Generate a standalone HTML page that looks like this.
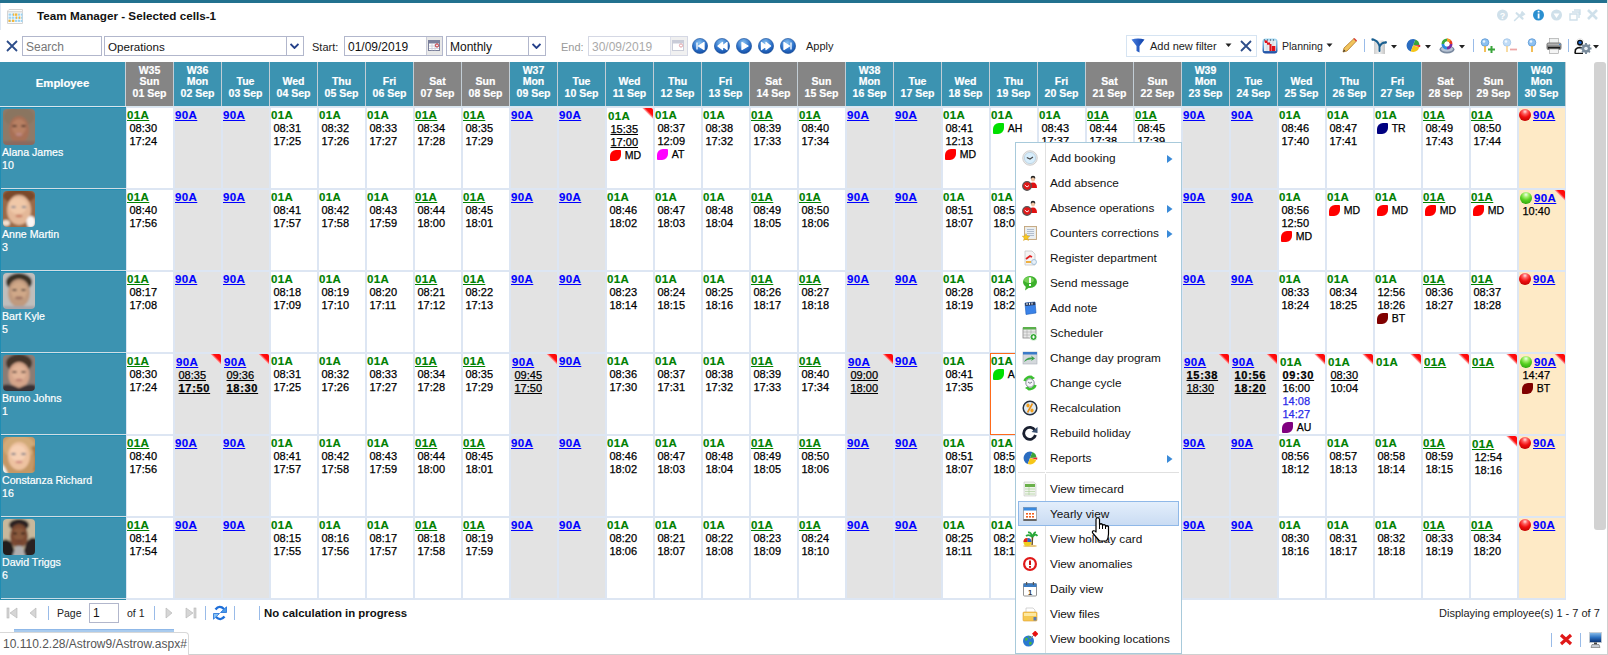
<!DOCTYPE html><html><head><meta charset="utf-8"><style>

*{box-sizing:border-box}
html,body{margin:0;padding:0;width:1608px;height:655px;overflow:hidden;background:#fff;font-family:"Liberation Sans", sans-serif;}
.a{position:absolute}
.hd{position:absolute;top:62px;height:44px;width:47px;color:#fff;font-weight:bold;font-size:10.5px;line-height:12px;text-align:center;-webkit-text-stroke-width:0.2px}
.hd div{position:absolute;left:0;width:47px;white-space:nowrap}
.c{position:absolute;width:48px;height:82px;border:1px solid #dde6f3;overflow:hidden}
.cd{position:absolute;left:0px;top:1px;font-weight:bold;font-size:11.5px;line-height:13px;white-space:nowrap;-webkit-text-stroke-width:0.15px;letter-spacing:0.4px}
.g{color:#008000}.b{color:#0000ff}
.tl{position:absolute;left:2.5px;font-size:11px;line-height:13px;white-space:nowrap;color:#000;-webkit-text-stroke-width:0.25px}
.u{text-decoration:underline}
.bu{font-weight:bold;text-decoration:underline;letter-spacing:0.7px}
.bl{color:#2a2ae8}
.flag{position:absolute;right:0;top:0}
.leaf{position:absolute;width:11px;height:11px;border-radius:6px 1px 6px 1px}
.ball{position:absolute;width:12px;height:12px;border-radius:50%}
.mi{position:absolute;left:1050px;font-size:11.8px;line-height:14px;white-space:nowrap;color:#111}
.tb{font-size:11px;color:#222;white-space:nowrap;position:absolute}

</style></head><body>
<div class="a" style="left:0;top:0;width:1607px;height:3px;background:#22718f"></div>
<div class="a" style="left:0;top:3px;width:1px;height:27px;background:#dfe8f3"></div>
<div class="a" style="left:1607px;top:0;width:1px;height:655px;background:#d0d0d0"></div>
<div class="a" style="left:0;top:654px;width:1608px;height:1px;background:#d0d0d0"></div>
<svg class="a" style="left:7px;top:9px" width="17" height="15" viewBox="0 0 17 15">
<path d="M2 0.5 H15.5 V14.5 H0.5 V2 Z" fill="#fbfcfd" stroke="#d4d4d4"/>
<rect x="1" y="2" width="14.5" height="1.5" fill="#dcdcdc"/>
<g fill="#9dd3f2"><rect x="1.5" y="4.5" width="14" height="2.2"/><rect x="1.5" y="7.6" width="14" height="2.2"/><rect x="1.5" y="10.7" width="14" height="2.2"/></g>
<g fill="#f7b534"><rect x="6" y="4.5" width="5" height="2.2"/><rect x="9" y="7.6" width="2" height="2.2"/><rect x="12" y="7.6" width="2" height="2.2"/><rect x="1.5" y="10.7" width="2" height="2.2"/><rect x="5" y="10.7" width="3" height="2.2"/></g>
<g stroke="#fff" stroke-width="0.6"><path d="M4.5 4v9M7.5 4v9M10.5 4v9M13.5 4v9"/></g>
</svg>
<div class="a" style="left:37px;top:8px;font-weight:bold;font-size:11.7px;line-height:16px;color:#111;white-space:nowrap">Team Manager - Selected cells-1</div>
<svg class="a" style="left:1494px;top:7px" width="110" height="17" viewBox="0 0 110 17">
<circle cx="8.5" cy="8" r="5.5" fill="#cfe0ea"/><text x="8.5" y="11.5" font-size="9" font-weight="bold" fill="#fff" text-anchor="middle" font-family="Liberation Sans">?</text>
<path d="M20.6 13.5 L26 8.2" stroke="#cfe0ea" stroke-width="1.6" stroke-linecap="round"/><path d="M22.6 6.2 L28.6 11.6" stroke="#cfe0ea" stroke-width="2.2" stroke-linecap="round"/><path d="M25.5 8.5 L28 3.8 L31.5 7.3 L27.5 10 Z" fill="#cfe0ea"/>
<circle cx="44.5" cy="8" r="5.5" fill="#2a8fd0"/><rect x="43.7" y="6.5" width="1.8" height="5" fill="#fff"/><rect x="43.7" y="3.8" width="1.8" height="1.6" fill="#fff"/>
<circle cx="62.5" cy="8" r="5.5" fill="#cfe0ea"/><path d="M59.5 6.5 L65.5 6.5 L62.5 11 Z" fill="#fff"/>
<path d="M76 7 h7 v6 h-7 z M78 5 h7 v6 M80 3 h6 v5" stroke="#cfe0ea" stroke-width="1.4" fill="none"/>
<path d="M94 3 L103 12 M103 3 L94 12" stroke="#cfe0ea" stroke-width="2.6"/>
</svg>
<svg class="a" style="left:6px;top:40px" width="12" height="12" viewBox="0 0 12 12"><path d="M1 1 L11 11 M11 1 L1 11" stroke="#2d4d8a" stroke-width="1.8"/></svg>
<div class="a" style="left:22px;top:36px;width:80px;height:20px;border:1px solid #b2b7cc;background:#fff"></div>
<div class="a tb" style="left:26px;top:39px;font-size:12px;line-height:16px;color:#777">Search</div>
<div class="a" style="left:104px;top:36px;width:200px;height:20px;border:1px solid #b2b7cc;background:#fff"></div>
<div class="a" style="left:286px;top:37px;width:1px;height:18px;background:#b2b7cc"></div>
<svg class="a" style="left:290px;top:43px" width="9" height="6" viewBox="0 0 9 6"><path d="M0.5 1 L4.5 5 L8.5 1" stroke="#24408a" stroke-width="1.9" fill="none"/></svg>
<div class="a tb" style="left:108px;top:39px;font-size:11.6px;line-height:16px;color:#111">Operations</div>
<div class="a tb" style="left:312px;top:40px;line-height:14px">Start:</div>
<div class="a" style="left:344px;top:36px;width:99px;height:20px;border:1px solid #b2b7cc;background:#fff"></div>
<div class="a" style="left:426px;top:37px;width:16px;height:18px;background:#e8e8e8;border-left:1px solid #c9cbd8"></div>
<svg class="a" style="left:428px;top:40px" width="13" height="12" viewBox="0 0 13 12"><rect x="0.5" y="0.5" width="11" height="10" fill="#fff" stroke="#7a7f9a"/><rect x="1" y="1" width="10" height="2.5" fill="#7a7f9a"/><g stroke="#c5c8d6" stroke-width="0.8"><path d="M1 6h10M1 8.5h10M4 3.5v7M7 3.5v7"/></g><circle cx="9" cy="5.5" r="1.6" fill="none" stroke="#c0202a" stroke-width="1"/></svg>
<div class="a tb" style="left:348px;top:39px;font-size:12px;line-height:16px;color:#111">01/09/2019</div>
<div class="a" style="left:446px;top:36px;width:100px;height:20px;border:1px solid #b2b7cc;background:#fff"></div>
<div class="a" style="left:528px;top:37px;width:1px;height:18px;background:#b2b7cc"></div>
<svg class="a" style="left:532px;top:43px" width="9" height="6" viewBox="0 0 9 6"><path d="M0.5 1 L4.5 5 L8.5 1" stroke="#24408a" stroke-width="1.9" fill="none"/></svg>
<div class="a tb" style="left:450px;top:39px;font-size:12px;line-height:16px;color:#111">Monthly</div>
<div class="a tb" style="left:561px;top:40px;line-height:14px;color:#999">End:</div>
<div class="a" style="left:588px;top:36px;width:100px;height:20px;border:1px solid #d5d8e4;background:#fff"></div>
<div class="a" style="left:670px;top:37px;width:17px;height:18px;background:#f0f0f0;border-left:1px solid #dde0ea"></div>
<svg class="a" style="left:672px;top:40px" width="13" height="12" viewBox="0 0 13 12"><rect x="0.5" y="0.5" width="11" height="10" fill="#fff" stroke="#c9ccd8"/><rect x="1" y="1" width="10" height="2.5" fill="#c9ccd8"/><circle cx="9" cy="5.5" r="1.6" fill="none" stroke="#e0a0a6" stroke-width="1"/></svg>
<div class="a tb" style="left:592px;top:39px;font-size:12px;line-height:16px;color:#aaa">30/09/2019</div>
<svg class="a" style="left:692px;top:38px" width="16" height="16" viewBox="0 0 16 16"><defs><radialGradient id="ng0" cx="0.45" cy="0.3" r="0.75"><stop offset="0" stop-color="#8cc4f2"/><stop offset="0.6" stop-color="#2a6fc8"/><stop offset="1" stop-color="#10459a"/></radialGradient></defs><circle cx="8" cy="8" r="7.6" fill="url(#ng0)" stroke="#1a4f98" stroke-width="0.6"/><path d="M5 4.5 v7 M12 4.5 L6.5 8 L12 11.5 Z" fill="#fff" stroke="#fff" stroke-width="1.3" stroke-linejoin="round"/></svg>
<svg class="a" style="left:714px;top:38px" width="16" height="16" viewBox="0 0 16 16"><defs><radialGradient id="ng1" cx="0.45" cy="0.3" r="0.75"><stop offset="0" stop-color="#8cc4f2"/><stop offset="0.6" stop-color="#2a6fc8"/><stop offset="1" stop-color="#10459a"/></radialGradient></defs><circle cx="8" cy="8" r="7.6" fill="url(#ng1)" stroke="#1a4f98" stroke-width="0.6"/><path d="M8.5 4.5 L4 8 L8.5 11.5 Z M13 4.5 L8.5 8 L13 11.5 Z" fill="#fff" stroke="#fff" stroke-width="1.3" stroke-linejoin="round"/></svg>
<svg class="a" style="left:736px;top:38px" width="16" height="16" viewBox="0 0 16 16"><defs><radialGradient id="ng2" cx="0.45" cy="0.3" r="0.75"><stop offset="0" stop-color="#8cc4f2"/><stop offset="0.6" stop-color="#2a6fc8"/><stop offset="1" stop-color="#10459a"/></radialGradient></defs><circle cx="8" cy="8" r="7.6" fill="url(#ng2)" stroke="#1a4f98" stroke-width="0.6"/><path d="M6 4.5 L12 8 L6 11.5 Z" fill="#fff" stroke="#fff" stroke-width="1.3" stroke-linejoin="round"/></svg>
<svg class="a" style="left:758px;top:38px" width="16" height="16" viewBox="0 0 16 16"><defs><radialGradient id="ng3" cx="0.45" cy="0.3" r="0.75"><stop offset="0" stop-color="#8cc4f2"/><stop offset="0.6" stop-color="#2a6fc8"/><stop offset="1" stop-color="#10459a"/></radialGradient></defs><circle cx="8" cy="8" r="7.6" fill="url(#ng3)" stroke="#1a4f98" stroke-width="0.6"/><path d="M3.5 4.5 L8 8 L3.5 11.5 Z M8 4.5 L12.5 8 L8 11.5 Z" fill="#fff" stroke="#fff" stroke-width="1.3" stroke-linejoin="round"/></svg>
<svg class="a" style="left:780px;top:38px" width="16" height="16" viewBox="0 0 16 16"><defs><radialGradient id="ng4" cx="0.45" cy="0.3" r="0.75"><stop offset="0" stop-color="#8cc4f2"/><stop offset="0.6" stop-color="#2a6fc8"/><stop offset="1" stop-color="#10459a"/></radialGradient></defs><circle cx="8" cy="8" r="7.6" fill="url(#ng4)" stroke="#1a4f98" stroke-width="0.6"/><path d="M4 4.5 L9.5 8 L4 11.5 Z M11 4.5 v7" fill="#fff" stroke="#fff" stroke-width="1.3" stroke-linejoin="round"/></svg>
<div class="a tb" style="left:806px;top:39px;line-height:14px;color:#222">Apply</div>
<div class="a" style="left:1126px;top:35px;width:131px;height:22px;border:1px solid #d6e4f2;background:#fff"></div>
<svg class="a" style="left:1131px;top:38px" width="14" height="16" viewBox="0 0 14 16"><defs><linearGradient id="fg" x1="0" x2="1"><stop offset="0" stop-color="#4a7fe0"/><stop offset="1" stop-color="#0b3ea8"/></linearGradient></defs><path d="M0.5 1.5 Q7 -0.5 13.5 1.5 L8.5 8 V14.5 L5.5 13 V8 Z" fill="url(#fg)"/></svg>
<div class="a tb" style="left:1150px;top:39px;line-height:14px;color:#222">Add new filter</div>
<svg class="a" style="left:1225px;top:43px" width="7" height="5"><path d="M0.5 0.5 L6.5 0.5 L3.5 4 Z" fill="#222"/></svg>
<svg class="a" style="left:1240px;top:40px" width="12" height="12" viewBox="0 0 12 12"><path d="M1 1 L11 11 M11 1 L1 11" stroke="#2d4d8a" stroke-width="1.8"/></svg>
<svg class="a" style="left:1262px;top:38px" width="16" height="16" viewBox="0 0 16 16"><defs><linearGradient id="plg" x1="0" y1="0" x2="0" y2="1"><stop offset="0" stop-color="#a8dcf4"/><stop offset="0.6" stop-color="#5a9ad0"/><stop offset="1" stop-color="#1a48a0"/></linearGradient></defs><rect x="0.5" y="0.5" width="15" height="15" rx="3" fill="url(#plg)"/><rect x="2" y="2.5" width="12" height="10.5" fill="#e8eef2"/><g stroke="#c8d0d8" stroke-width="0.7"><path d="M5 2.5v10.5M8 2.5v10.5M11 2.5v10.5"/></g><g fill="#e01018"><circle cx="3.8" cy="3.6" r="1.3"/><rect x="3" y="3" width="2.5" height="2"/><rect x="5" y="4.5" width="3" height="2.2"/><rect x="7.5" y="6" width="2" height="7"/><rect x="9.8" y="8" width="3.5" height="5"/></g><g fill="#3a3a48"><rect x="2" y="1.5" width="1" height="1"/><rect x="5" y="1.5" width="1" height="1"/><rect x="8" y="1.5" width="1" height="1"/><rect x="11" y="1.5" width="1" height="1"/></g></svg>
<div class="a tb" style="left:1282px;top:39px;font-size:10.5px;line-height:14px;color:#222">Planning</div>
<svg class="a" style="left:1326px;top:43px" width="7" height="5"><path d="M0.5 0.5 L6.5 0.5 L3.5 4 Z" fill="#222"/></svg>
<svg class="a" style="left:1341px;top:37px" width="17" height="17" viewBox="0 0 17 17"><path d="M2 15 L3 11 L13 1.5 L15.5 4 L6 14 Z" fill="#f1c35b" stroke="#b07a2a" stroke-width="0.8"/><path d="M12.5 2 L15 4.5 L16 3.5 L13.5 1 Z" fill="#e04040"/><path d="M2 15 L3 12.5 L4.5 14 Z" fill="#333"/></svg>
<div class="a" style="left:1364px;top:39px;width:1px;height:13px;background:#99bbe8"></div>
<svg class="a" style="left:1371px;top:38px" width="16" height="16" viewBox="0 0 16 16"><defs><linearGradient id="ylg" x1="0" x2="1"><stop offset="0" stop-color="#cfcfcf"/><stop offset="0.5" stop-color="#efefef"/><stop offset="1" stop-color="#c4c4c4"/></linearGradient></defs><path d="M3 2.5 L12 2.5 L14 4.5 L14 16 L3 16 Z" fill="url(#ylg)"/><path d="M1.5 1.5 Q6.5 2 8.5 8 L8.5 13" stroke="#1a5f90" stroke-width="1.9" fill="none" stroke-linecap="round"/><path d="M15 4.5 Q11 4 8.8 8" stroke="#1a5f90" stroke-width="1.9" fill="none" stroke-linecap="round"/><path d="M0.5 0.5 L3.5 0.8 L1 3 Z M15.5 3 L15 6 L13 4 Z" fill="#1a5f90"/></svg>
<svg class="a" style="left:1391px;top:45px" width="6" height="4"><path d="M0 0 L6 0 L3 3.5 Z" fill="#222"/></svg>
<svg class="a" style="left:1406px;top:38px" width="15" height="15" viewBox="0 0 15 15"><path d="M7 7.5 L4.78 13.61 A6.5 6.5 0 1 1 9.43 1.47 Z" fill="#2a6cc0"/><path d="M7 7.5 L9.43 1.47 A6.5 6.5 0 0 1 13.48 6.93 Z" fill="#39a43a"/><path d="M7.8 7.5 L14.28 6.93 A6.5 6.5 0 0 1 14.08 9.18 Z" fill="#e8292f"/><path d="M7 7.5 L13.28 9.18 A6.5 6.5 0 0 1 4.78 13.61 Z" fill="#f6c619"/></svg>
<svg class="a" style="left:1425px;top:45px" width="6" height="4"><path d="M0 0 L6 0 L3 3.5 Z" fill="#222"/></svg>
<svg class="a" style="left:1439px;top:37px" width="17" height="17" viewBox="0 0 17 17"><ellipse cx="8" cy="12.5" rx="7.5" ry="4" fill="#7a8aa0"/><ellipse cx="8" cy="12" rx="6" ry="2.8" fill="#b8c4d4"/><path d="M8 7 m-5.5 0 a5.5 5.5 0 1 0 11 0 a5.5 5.5 0 1 0 -11 0" fill="none"/><path d="M8 1.5 A5.5 5.5 0 0 1 13.5 7 L10.5 7 A2.5 2.5 0 0 0 8 4.5 Z" fill="#e83a20"/><path d="M13.5 7 A5.5 5.5 0 0 1 8 12.5 L8 9.5 A2.5 2.5 0 0 0 10.5 7 Z" fill="#7a2aa0"/><path d="M8 12.5 A5.5 5.5 0 0 1 2.5 7 L5.5 7 A2.5 2.5 0 0 0 8 9.5 Z" fill="#2a8ae0"/><path d="M2.5 7 A5.5 5.5 0 0 1 8 1.5 L8 4.5 A2.5 2.5 0 0 0 5.5 7 Z" fill="#3aa83a"/><path d="M8 1.5 A5.5 5.5 0 0 1 12 3.2 L10 5.2 A2.5 2.5 0 0 0 8 4.5 Z" fill="#f0a020"/><circle cx="8" cy="7" r="2.5" fill="#fff"/></svg>
<svg class="a" style="left:1459px;top:45px" width="6" height="4"><path d="M0 0 L6 0 L3 3.5 Z" fill="#222"/></svg>
<div class="a" style="left:1473px;top:39px;width:1px;height:13px;background:#99bbe8"></div>
<svg class="a" style="left:1480px;top:38px;opacity:1" width="16" height="16" viewBox="0 0 16 16"><circle cx="5" cy="4.5" r="3.8" fill="#8fc1f0" stroke="#4f8fd0" stroke-width="0.7"/><circle cx="4" cy="3.5" r="1.3" fill="#e8f4ff"/><rect x="4.2" y="8" width="1.6" height="6" fill="#f0b030"/><path d="M8 11.5 h7 M11.5 8 v7" stroke="#39a43a" stroke-width="2"/></svg>
<svg class="a" style="left:1502px;top:38px;opacity:0.55" width="16" height="16" viewBox="0 0 16 16"><circle cx="5" cy="4.5" r="3.8" fill="#8fc1f0" stroke="#4f8fd0" stroke-width="0.7"/><circle cx="4" cy="3.5" r="1.3" fill="#e8f4ff"/><rect x="4.2" y="8" width="1.6" height="6" fill="#f0b030"/><path d="M8 11.5 h7" stroke="#e06060" stroke-width="1.8"/></svg>
<svg class="a" style="left:1527px;top:38px;opacity:1" width="16" height="16" viewBox="0 0 16 16"><circle cx="5" cy="4.5" r="3.8" fill="#8fc1f0" stroke="#4f8fd0" stroke-width="0.7"/><circle cx="4" cy="3.5" r="1.3" fill="#e8f4ff"/><rect x="4.2" y="8" width="1.6" height="6" fill="#f0b030"/></svg>
<svg class="a" style="left:1546px;top:38px" width="16" height="16" viewBox="0 0 16 16"><rect x="3.5" y="0.5" width="9" height="5" fill="#eef0f0" stroke="#a8a8a8" stroke-width="0.7"/><rect x="0.5" y="4.5" width="15" height="7.5" rx="2" fill="#7a7a7a"/><rect x="1.5" y="5.5" width="13" height="2" fill="#b0b0b0"/><rect x="2" y="9" width="12" height="1.6" fill="#1a1a1a"/><rect x="13" y="6" width="1.5" height="1" fill="#3a8ae0"/><rect x="3.5" y="11" width="9" height="4.5" fill="#f4f4f4" stroke="#999" stroke-width="0.6"/></svg>
<div class="a" style="left:1568px;top:39px;width:1px;height:13px;background:#99bbe8"></div>
<svg class="a" style="left:1574px;top:38px" width="18" height="16" viewBox="0 0 18 16"><circle cx="6" cy="4.8" r="4.2" fill="#fff" stroke="#ddd" stroke-width="0.6"/><circle cx="6" cy="4.8" r="3" fill="#111"/><circle cx="6" cy="4.5" r="1.6" fill="#1a6ad8"/><path d="M1 15.5 L1.5 11.5 Q3 9.5 6 9.5 L9 10 M1 15.5 L9 15.5" stroke="#111" stroke-width="1.6" fill="none"/><g transform="translate(12 10.5)"><circle r="4.3" fill="#7a8c9c"/><g fill="#7a8c9c"><rect x="-1" y="-5.5" width="2" height="11"/><rect x="-5.5" y="-1" width="11" height="2"/><rect x="-1" y="-5.5" width="2" height="11" transform="rotate(45)"/><rect x="-1" y="-5.5" width="2" height="11" transform="rotate(-45)"/></g><circle r="1.8" fill="#e8eef4"/></g></svg>
<svg class="a" style="left:1593px;top:45px" width="6" height="4"><path d="M0 0 L6 0 L3 3.5 Z" fill="#222"/></svg>
<div class="a" style="left:0;top:62px;width:125px;height:44px;background:#3c93b1"></div>
<div class="a" style="left:0;top:76px;width:125px;text-align:center;color:#fff;font-weight:bold;font-size:11.3px;line-height:14px;-webkit-text-stroke-width:0.2px">Employee</div>
<div class="a" style="left:125px;top:62px;width:1px;height:44px;background:#c8d0d8"></div>
<div class="hd" style="left:126px;background:#858585">
<div style="top:2px">W35</div>
<div style="top:13px">Sun</div><div style="top:25px">01 Sep</div></div>
<div class="a" style="left:173px;top:62px;width:1px;height:44px;background:#c2cdd5"></div>
<div class="hd" style="left:174px;background:#3c93b1">
<div style="top:2px">W36</div>
<div style="top:13px">Mon</div><div style="top:25px">02 Sep</div></div>
<div class="a" style="left:221px;top:62px;width:1px;height:44px;background:#c2cdd5"></div>
<div class="hd" style="left:222px;background:#3c93b1">
<div style="top:13px">Tue</div><div style="top:25px">03 Sep</div></div>
<div class="a" style="left:269px;top:62px;width:1px;height:44px;background:#c2cdd5"></div>
<div class="hd" style="left:270px;background:#3c93b1">
<div style="top:13px">Wed</div><div style="top:25px">04 Sep</div></div>
<div class="a" style="left:317px;top:62px;width:1px;height:44px;background:#c2cdd5"></div>
<div class="hd" style="left:318px;background:#3c93b1">
<div style="top:13px">Thu</div><div style="top:25px">05 Sep</div></div>
<div class="a" style="left:365px;top:62px;width:1px;height:44px;background:#c2cdd5"></div>
<div class="hd" style="left:366px;background:#3c93b1">
<div style="top:13px">Fri</div><div style="top:25px">06 Sep</div></div>
<div class="a" style="left:413px;top:62px;width:1px;height:44px;background:#c2cdd5"></div>
<div class="hd" style="left:414px;background:#858585">
<div style="top:13px">Sat</div><div style="top:25px">07 Sep</div></div>
<div class="a" style="left:461px;top:62px;width:1px;height:44px;background:#c2cdd5"></div>
<div class="hd" style="left:462px;background:#858585">
<div style="top:13px">Sun</div><div style="top:25px">08 Sep</div></div>
<div class="a" style="left:509px;top:62px;width:1px;height:44px;background:#c2cdd5"></div>
<div class="hd" style="left:510px;background:#3c93b1">
<div style="top:2px">W37</div>
<div style="top:13px">Mon</div><div style="top:25px">09 Sep</div></div>
<div class="a" style="left:557px;top:62px;width:1px;height:44px;background:#c2cdd5"></div>
<div class="hd" style="left:558px;background:#3c93b1">
<div style="top:13px">Tue</div><div style="top:25px">10 Sep</div></div>
<div class="a" style="left:605px;top:62px;width:1px;height:44px;background:#c2cdd5"></div>
<div class="hd" style="left:606px;background:#3c93b1">
<div style="top:13px">Wed</div><div style="top:25px">11 Sep</div></div>
<div class="a" style="left:653px;top:62px;width:1px;height:44px;background:#c2cdd5"></div>
<div class="hd" style="left:654px;background:#3c93b1">
<div style="top:13px">Thu</div><div style="top:25px">12 Sep</div></div>
<div class="a" style="left:701px;top:62px;width:1px;height:44px;background:#c2cdd5"></div>
<div class="hd" style="left:702px;background:#3c93b1">
<div style="top:13px">Fri</div><div style="top:25px">13 Sep</div></div>
<div class="a" style="left:749px;top:62px;width:1px;height:44px;background:#c2cdd5"></div>
<div class="hd" style="left:750px;background:#858585">
<div style="top:13px">Sat</div><div style="top:25px">14 Sep</div></div>
<div class="a" style="left:797px;top:62px;width:1px;height:44px;background:#c2cdd5"></div>
<div class="hd" style="left:798px;background:#858585">
<div style="top:13px">Sun</div><div style="top:25px">15 Sep</div></div>
<div class="a" style="left:845px;top:62px;width:1px;height:44px;background:#c2cdd5"></div>
<div class="hd" style="left:846px;background:#3c93b1">
<div style="top:2px">W38</div>
<div style="top:13px">Mon</div><div style="top:25px">16 Sep</div></div>
<div class="a" style="left:893px;top:62px;width:1px;height:44px;background:#c2cdd5"></div>
<div class="hd" style="left:894px;background:#3c93b1">
<div style="top:13px">Tue</div><div style="top:25px">17 Sep</div></div>
<div class="a" style="left:941px;top:62px;width:1px;height:44px;background:#c2cdd5"></div>
<div class="hd" style="left:942px;background:#3c93b1">
<div style="top:13px">Wed</div><div style="top:25px">18 Sep</div></div>
<div class="a" style="left:989px;top:62px;width:1px;height:44px;background:#c2cdd5"></div>
<div class="hd" style="left:990px;background:#3c93b1">
<div style="top:13px">Thu</div><div style="top:25px">19 Sep</div></div>
<div class="a" style="left:1037px;top:62px;width:1px;height:44px;background:#c2cdd5"></div>
<div class="hd" style="left:1038px;background:#3c93b1">
<div style="top:13px">Fri</div><div style="top:25px">20 Sep</div></div>
<div class="a" style="left:1085px;top:62px;width:1px;height:44px;background:#c2cdd5"></div>
<div class="hd" style="left:1086px;background:#858585">
<div style="top:13px">Sat</div><div style="top:25px">21 Sep</div></div>
<div class="a" style="left:1133px;top:62px;width:1px;height:44px;background:#c2cdd5"></div>
<div class="hd" style="left:1134px;background:#858585">
<div style="top:13px">Sun</div><div style="top:25px">22 Sep</div></div>
<div class="a" style="left:1181px;top:62px;width:1px;height:44px;background:#c2cdd5"></div>
<div class="hd" style="left:1182px;background:#3c93b1">
<div style="top:2px">W39</div>
<div style="top:13px">Mon</div><div style="top:25px">23 Sep</div></div>
<div class="a" style="left:1229px;top:62px;width:1px;height:44px;background:#c2cdd5"></div>
<div class="hd" style="left:1230px;background:#3c93b1">
<div style="top:13px">Tue</div><div style="top:25px">24 Sep</div></div>
<div class="a" style="left:1277px;top:62px;width:1px;height:44px;background:#c2cdd5"></div>
<div class="hd" style="left:1278px;background:#3c93b1">
<div style="top:13px">Wed</div><div style="top:25px">25 Sep</div></div>
<div class="a" style="left:1325px;top:62px;width:1px;height:44px;background:#c2cdd5"></div>
<div class="hd" style="left:1326px;background:#3c93b1">
<div style="top:13px">Thu</div><div style="top:25px">26 Sep</div></div>
<div class="a" style="left:1373px;top:62px;width:1px;height:44px;background:#c2cdd5"></div>
<div class="hd" style="left:1374px;background:#3c93b1">
<div style="top:13px">Fri</div><div style="top:25px">27 Sep</div></div>
<div class="a" style="left:1421px;top:62px;width:1px;height:44px;background:#c2cdd5"></div>
<div class="hd" style="left:1422px;background:#858585">
<div style="top:13px">Sat</div><div style="top:25px">28 Sep</div></div>
<div class="a" style="left:1469px;top:62px;width:1px;height:44px;background:#c2cdd5"></div>
<div class="hd" style="left:1470px;background:#858585">
<div style="top:13px">Sun</div><div style="top:25px">29 Sep</div></div>
<div class="a" style="left:1517px;top:62px;width:1px;height:44px;background:#c2cdd5"></div>
<div class="hd" style="left:1518px;background:#3c93b1">
<div style="top:2px">W40</div>
<div style="top:13px">Mon</div><div style="top:25px">30 Sep</div></div>
<div class="a" style="left:1565px;top:62px;width:1px;height:44px;background:#c2cdd5"></div>
<div class="a" style="left:0;top:106px;width:1566px;height:1px;background:#d8e6ee"></div>
<div class="a" style="left:0;top:107px;width:126px;height:81px;background:#3c93b1"></div>
<div class="a" style="left:1px;top:188px;width:125px;height:1px;background:#d0dde4"></div>
<div class="a" style="left:0;top:107px;width:126px;height:1px;background:#1f8db3"></div>
<svg class="a" style="left:3px;top:109px" width="32" height="36" viewBox="0 0 32 36"><defs><clipPath id="cpp1"><rect width="32" height="36" rx="4"/></clipPath><filter id="blp1" x="-10%" y="-10%" width="120%" height="120%"><feGaussianBlur stdDeviation="0.9"/></filter></defs><g clip-path="url(#cpp1)"><g filter="url(#blp1)"><rect x="-2" y="-2" width="36" height="40" fill="#8e7a68"/><ellipse cx="16" cy="8" rx="15" ry="10" fill="#8a7460"/><ellipse cx="16" cy="21" rx="10" ry="14" fill="#a87056"/><ellipse cx="16" cy="18" rx="7" ry="8" fill="#b88064"/><ellipse cx="11.5" cy="17" rx="2.4" ry="1" fill="#3a2620"/><ellipse cx="20.5" cy="17" rx="2.4" ry="1" fill="#3a2620"/><ellipse cx="16" cy="25.5" rx="3.2" ry="1.3" fill="#c08a88"/><rect x="0" y="32" width="32" height="6" fill="#8a6a60"/></g></g></svg>
<div class="a" style="left:2px;top:146px;color:#fff;font-size:10.6px;line-height:13px;white-space:nowrap;-webkit-text-stroke:0.2px #fff">Alana James<br>10</div>
<div class="c" style="left:126px;top:107px;background:#fff">
<div class="cd g u" style="left:0px;top:1px">01A</div>
<div class="tl" style="top:14px;left:2.5px">08:30</div>
<div class="tl" style="top:27px;left:2.5px">17:24</div>
</div>
<div class="c" style="left:174px;top:107px;background:#e3e3e3">
<div class="cd b u" style="left:0px;top:1px">90A</div>
</div>
<div class="c" style="left:222px;top:107px;background:#e3e3e3">
<div class="cd b u" style="left:0px;top:1px">90A</div>
</div>
<div class="c" style="left:270px;top:107px;background:#fff">
<div class="cd g" style="left:0px;top:1px">01A</div>
<div class="tl" style="top:14px;left:2.5px">08:31</div>
<div class="tl" style="top:27px;left:2.5px">17:25</div>
</div>
<div class="c" style="left:318px;top:107px;background:#fff">
<div class="cd g" style="left:0px;top:1px">01A</div>
<div class="tl" style="top:14px;left:2.5px">08:32</div>
<div class="tl" style="top:27px;left:2.5px">17:26</div>
</div>
<div class="c" style="left:366px;top:107px;background:#fff">
<div class="cd g" style="left:0px;top:1px">01A</div>
<div class="tl" style="top:14px;left:2.5px">08:33</div>
<div class="tl" style="top:27px;left:2.5px">17:27</div>
</div>
<div class="c" style="left:414px;top:107px;background:#fff">
<div class="cd g u" style="left:0px;top:1px">01A</div>
<div class="tl" style="top:14px;left:2.5px">08:34</div>
<div class="tl" style="top:27px;left:2.5px">17:28</div>
</div>
<div class="c" style="left:462px;top:107px;background:#fff">
<div class="cd g u" style="left:0px;top:1px">01A</div>
<div class="tl" style="top:14px;left:2.5px">08:35</div>
<div class="tl" style="top:27px;left:2.5px">17:29</div>
</div>
<div class="c" style="left:510px;top:107px;background:#e3e3e3">
<div class="cd b u" style="left:0px;top:1px">90A</div>
</div>
<div class="c" style="left:558px;top:107px;background:#e3e3e3">
<div class="cd b u" style="left:0px;top:1px">90A</div>
</div>
<div class="c" style="left:606px;top:107px;background:#fff">
<div class="cd g" style="left:1px;top:2px">01A</div>
<div class="tl u" style="top:15px;left:3.5px">15:35</div>
<div class="tl u" style="top:28px;left:3.5px">17:00</div>
<div class="leaf" style="left:2.5px;top:41.5px;background:#ff0000"></div>
<div class="tl" style="left:17.7px;top:41px;font-size:10.5px">MD</div>
<svg class="flag" width="11" height="11" viewBox="0 0 11 11"><defs><linearGradient id="flg" x1="1" y1="0" x2="0.5" y2="0.5"><stop offset="0" stop-color="#ff0000"/><stop offset="0.7" stop-color="#ff1010"/><stop offset="1" stop-color="#ffd0d0"/></linearGradient></defs><path d="M0 0 H9 Q11 0 11 2 V11 Z" fill="url(#flg)"/></svg>
</div>
<div class="c" style="left:654px;top:107px;background:#fff">
<div class="cd g" style="left:0px;top:1px">01A</div>
<div class="tl" style="top:14px;left:2.5px">08:37</div>
<div class="tl" style="top:27px;left:2.5px">12:09</div>
<div class="leaf" style="left:1.5px;top:40.5px;background:#ff00ff"></div>
<div class="tl" style="left:16.7px;top:40px;font-size:10.5px">AT</div>
</div>
<div class="c" style="left:702px;top:107px;background:#fff">
<div class="cd g" style="left:0px;top:1px">01A</div>
<div class="tl" style="top:14px;left:2.5px">08:38</div>
<div class="tl" style="top:27px;left:2.5px">17:32</div>
</div>
<div class="c" style="left:750px;top:107px;background:#fff">
<div class="cd g u" style="left:0px;top:1px">01A</div>
<div class="tl" style="top:14px;left:2.5px">08:39</div>
<div class="tl" style="top:27px;left:2.5px">17:33</div>
</div>
<div class="c" style="left:798px;top:107px;background:#fff">
<div class="cd g u" style="left:0px;top:1px">01A</div>
<div class="tl" style="top:14px;left:2.5px">08:40</div>
<div class="tl" style="top:27px;left:2.5px">17:34</div>
</div>
<div class="c" style="left:846px;top:107px;background:#e3e3e3">
<div class="cd b u" style="left:0px;top:1px">90A</div>
</div>
<div class="c" style="left:894px;top:107px;background:#e3e3e3">
<div class="cd b u" style="left:0px;top:1px">90A</div>
</div>
<div class="c" style="left:942px;top:107px;background:#fff">
<div class="cd g" style="left:0px;top:1px">01A</div>
<div class="tl" style="top:14px;left:2.5px">08:41</div>
<div class="tl" style="top:27px;left:2.5px">12:13</div>
<div class="leaf" style="left:1.5px;top:40.5px;background:#ff0000"></div>
<div class="tl" style="left:16.7px;top:40px;font-size:10.5px">MD</div>
</div>
<div class="c" style="left:990px;top:107px;background:#fff">
<div class="cd g" style="left:0px;top:1px">01A</div>
<div class="leaf" style="left:1.5px;top:14.5px;background:#00e000"></div>
<div class="tl" style="left:16.7px;top:14px;font-size:10.5px">AH</div>
</div>
<div class="c" style="left:1038px;top:107px;background:#fff">
<div class="cd g" style="left:0px;top:1px">01A</div>
<div class="tl" style="top:14px;left:2.5px">08:43</div>
<div class="tl" style="top:27px;left:2.5px">17:37</div>
</div>
<div class="c" style="left:1086px;top:107px;background:#fff">
<div class="cd g u" style="left:0px;top:1px">01A</div>
<div class="tl" style="top:14px;left:2.5px">08:44</div>
<div class="tl" style="top:27px;left:2.5px">17:38</div>
</div>
<div class="c" style="left:1134px;top:107px;background:#fff">
<div class="cd g u" style="left:0px;top:1px">01A</div>
<div class="tl" style="top:14px;left:2.5px">08:45</div>
<div class="tl" style="top:27px;left:2.5px">17:39</div>
</div>
<div class="c" style="left:1182px;top:107px;background:#e3e3e3">
<div class="cd b u" style="left:0px;top:1px">90A</div>
</div>
<div class="c" style="left:1230px;top:107px;background:#e3e3e3">
<div class="cd b u" style="left:0px;top:1px">90A</div>
</div>
<div class="c" style="left:1278px;top:107px;background:#fff">
<div class="cd g" style="left:0px;top:1px">01A</div>
<div class="tl" style="top:14px;left:2.5px">08:46</div>
<div class="tl" style="top:27px;left:2.5px">17:40</div>
</div>
<div class="c" style="left:1326px;top:107px;background:#fff">
<div class="cd g" style="left:0px;top:1px">01A</div>
<div class="tl" style="top:14px;left:2.5px">08:47</div>
<div class="tl" style="top:27px;left:2.5px">17:41</div>
</div>
<div class="c" style="left:1374px;top:107px;background:#fff">
<div class="cd g" style="left:0px;top:1px">01A</div>
<div class="leaf" style="left:1.5px;top:14.5px;background:#000080"></div>
<div class="tl" style="left:16.7px;top:14px;font-size:10.5px">TR</div>
</div>
<div class="c" style="left:1422px;top:107px;background:#fff">
<div class="cd g u" style="left:0px;top:1px">01A</div>
<div class="tl" style="top:14px;left:2.5px">08:49</div>
<div class="tl" style="top:27px;left:2.5px">17:43</div>
</div>
<div class="c" style="left:1470px;top:107px;background:#fff">
<div class="cd g u" style="left:0px;top:1px">01A</div>
<div class="tl" style="top:14px;left:2.5px">08:50</div>
<div class="tl" style="top:27px;left:2.5px">17:44</div>
</div>
<div class="c" style="left:1518px;top:107px;background:#feeac6">
<div class="ball" style="left:0px;top:1px;background:radial-gradient(circle at 50% 22%, #ffe0e0 0%, #ff6060 22%, #f01010 50%, #c00000 85%, #a00000 100%)"></div>
<div class="cd b u" style="left:14px;top:1px">90A</div>
</div>
<div class="a" style="left:0;top:189px;width:126px;height:81px;background:#3c93b1"></div>
<div class="a" style="left:1px;top:270px;width:125px;height:1px;background:#d0dde4"></div>
<div class="a" style="left:0;top:189px;width:126px;height:1px;background:#1f8db3"></div>
<svg class="a" style="left:3px;top:191px" width="32" height="36" viewBox="0 0 32 36"><defs><clipPath id="cpp2"><rect width="32" height="36" rx="4"/></clipPath><filter id="blp2" x="-10%" y="-10%" width="120%" height="120%"><feGaussianBlur stdDeviation="0.9"/></filter></defs><g clip-path="url(#cpp2)"><g filter="url(#blp2)"><rect x="-2" y="-2" width="36" height="40" fill="#9a6a48"/><ellipse cx="16" cy="5" rx="16" ry="7" fill="#7a4a2a"/><ellipse cx="16" cy="19" rx="12" ry="15" fill="#e4b898"/><ellipse cx="15" cy="15" rx="9" ry="8" fill="#f0c8a8"/><ellipse cx="10.5" cy="16" rx="2.4" ry="1" fill="#7a8090"/><ellipse cx="21" cy="16" rx="2.4" ry="1" fill="#7a8090"/><ellipse cx="16" cy="25" rx="3.5" ry="1.3" fill="#c87a62"/><ellipse cx="28" cy="31" rx="4.5" ry="6" fill="#fbf6f4"/><ellipse cx="3" cy="32" rx="4" ry="3" fill="#f2e0d0"/></g></g></svg>
<div class="a" style="left:2px;top:228px;color:#fff;font-size:10.6px;line-height:13px;white-space:nowrap;-webkit-text-stroke:0.2px #fff">Anne Martin<br>3</div>
<div class="c" style="left:126px;top:189px;background:#fff">
<div class="cd g u" style="left:0px;top:1px">01A</div>
<div class="tl" style="top:14px;left:2.5px">08:40</div>
<div class="tl" style="top:27px;left:2.5px">17:56</div>
</div>
<div class="c" style="left:174px;top:189px;background:#e3e3e3">
<div class="cd b u" style="left:0px;top:1px">90A</div>
</div>
<div class="c" style="left:222px;top:189px;background:#e3e3e3">
<div class="cd b u" style="left:0px;top:1px">90A</div>
</div>
<div class="c" style="left:270px;top:189px;background:#fff">
<div class="cd g" style="left:0px;top:1px">01A</div>
<div class="tl" style="top:14px;left:2.5px">08:41</div>
<div class="tl" style="top:27px;left:2.5px">17:57</div>
</div>
<div class="c" style="left:318px;top:189px;background:#fff">
<div class="cd g" style="left:0px;top:1px">01A</div>
<div class="tl" style="top:14px;left:2.5px">08:42</div>
<div class="tl" style="top:27px;left:2.5px">17:58</div>
</div>
<div class="c" style="left:366px;top:189px;background:#fff">
<div class="cd g" style="left:0px;top:1px">01A</div>
<div class="tl" style="top:14px;left:2.5px">08:43</div>
<div class="tl" style="top:27px;left:2.5px">17:59</div>
</div>
<div class="c" style="left:414px;top:189px;background:#fff">
<div class="cd g u" style="left:0px;top:1px">01A</div>
<div class="tl" style="top:14px;left:2.5px">08:44</div>
<div class="tl" style="top:27px;left:2.5px">18:00</div>
</div>
<div class="c" style="left:462px;top:189px;background:#fff">
<div class="cd g u" style="left:0px;top:1px">01A</div>
<div class="tl" style="top:14px;left:2.5px">08:45</div>
<div class="tl" style="top:27px;left:2.5px">18:01</div>
</div>
<div class="c" style="left:510px;top:189px;background:#e3e3e3">
<div class="cd b u" style="left:0px;top:1px">90A</div>
</div>
<div class="c" style="left:558px;top:189px;background:#e3e3e3">
<div class="cd b u" style="left:0px;top:1px">90A</div>
</div>
<div class="c" style="left:606px;top:189px;background:#fff">
<div class="cd g" style="left:0px;top:1px">01A</div>
<div class="tl" style="top:14px;left:2.5px">08:46</div>
<div class="tl" style="top:27px;left:2.5px">18:02</div>
</div>
<div class="c" style="left:654px;top:189px;background:#fff">
<div class="cd g" style="left:0px;top:1px">01A</div>
<div class="tl" style="top:14px;left:2.5px">08:47</div>
<div class="tl" style="top:27px;left:2.5px">18:03</div>
</div>
<div class="c" style="left:702px;top:189px;background:#fff">
<div class="cd g" style="left:0px;top:1px">01A</div>
<div class="tl" style="top:14px;left:2.5px">08:48</div>
<div class="tl" style="top:27px;left:2.5px">18:04</div>
</div>
<div class="c" style="left:750px;top:189px;background:#fff">
<div class="cd g u" style="left:0px;top:1px">01A</div>
<div class="tl" style="top:14px;left:2.5px">08:49</div>
<div class="tl" style="top:27px;left:2.5px">18:05</div>
</div>
<div class="c" style="left:798px;top:189px;background:#fff">
<div class="cd g u" style="left:0px;top:1px">01A</div>
<div class="tl" style="top:14px;left:2.5px">08:50</div>
<div class="tl" style="top:27px;left:2.5px">18:06</div>
</div>
<div class="c" style="left:846px;top:189px;background:#e3e3e3">
<div class="cd b u" style="left:0px;top:1px">90A</div>
</div>
<div class="c" style="left:894px;top:189px;background:#e3e3e3">
<div class="cd b u" style="left:0px;top:1px">90A</div>
</div>
<div class="c" style="left:942px;top:189px;background:#fff">
<div class="cd g" style="left:0px;top:1px">01A</div>
<div class="tl" style="top:14px;left:2.5px">08:51</div>
<div class="tl" style="top:27px;left:2.5px">18:07</div>
</div>
<div class="c" style="left:990px;top:189px;background:#fff">
<div class="cd g" style="left:0px;top:1px">01A</div>
<div class="tl" style="top:14px;left:2.5px">08:52</div>
<div class="tl" style="top:27px;left:2.5px">18:08</div>
</div>
<div class="c" style="left:1038px;top:189px;background:#fff">
<div class="cd g" style="left:0px;top:1px">01A</div>
<div class="tl" style="top:14px;left:2.5px">08:53</div>
<div class="tl" style="top:27px;left:2.5px">18:09</div>
</div>
<div class="c" style="left:1086px;top:189px;background:#fff">
<div class="cd g u" style="left:0px;top:1px">01A</div>
<div class="tl" style="top:14px;left:2.5px">08:54</div>
<div class="tl" style="top:27px;left:2.5px">18:10</div>
</div>
<div class="c" style="left:1134px;top:189px;background:#fff">
<div class="cd g u" style="left:0px;top:1px">01A</div>
<div class="tl" style="top:14px;left:2.5px">08:55</div>
<div class="tl" style="top:27px;left:2.5px">18:11</div>
</div>
<div class="c" style="left:1182px;top:189px;background:#e3e3e3">
<div class="cd b u" style="left:0px;top:1px">90A</div>
</div>
<div class="c" style="left:1230px;top:189px;background:#e3e3e3">
<div class="cd b u" style="left:0px;top:1px">90A</div>
</div>
<div class="c" style="left:1278px;top:189px;background:#fff">
<div class="cd g" style="left:0px;top:1px">01A</div>
<div class="tl" style="top:14px;left:2.5px">08:56</div>
<div class="tl" style="top:27px;left:2.5px">12:50</div>
<div class="leaf" style="left:1.5px;top:40.5px;background:#ff0000"></div>
<div class="tl" style="left:16.7px;top:40px;font-size:10.5px">MD</div>
</div>
<div class="c" style="left:1326px;top:189px;background:#fff">
<div class="cd g" style="left:0px;top:1px">01A</div>
<div class="leaf" style="left:1.5px;top:14.5px;background:#ff0000"></div>
<div class="tl" style="left:16.7px;top:14px;font-size:10.5px">MD</div>
</div>
<div class="c" style="left:1374px;top:189px;background:#fff">
<div class="cd g" style="left:0px;top:1px">01A</div>
<div class="leaf" style="left:1.5px;top:14.5px;background:#ff0000"></div>
<div class="tl" style="left:16.7px;top:14px;font-size:10.5px">MD</div>
</div>
<div class="c" style="left:1422px;top:189px;background:#fff">
<div class="cd g u" style="left:0px;top:1px">01A</div>
<div class="leaf" style="left:1.5px;top:14.5px;background:#ff0000"></div>
<div class="tl" style="left:16.7px;top:14px;font-size:10.5px">MD</div>
</div>
<div class="c" style="left:1470px;top:189px;background:#fff">
<div class="cd g u" style="left:0px;top:1px">01A</div>
<div class="leaf" style="left:1.5px;top:14.5px;background:#ff0000"></div>
<div class="tl" style="left:16.7px;top:14px;font-size:10.5px">MD</div>
</div>
<div class="c" style="left:1518px;top:189px;background:#feeac6">
<div class="ball" style="left:1px;top:2px;background:radial-gradient(circle at 50% 22%, #f0fff0 0%, #a8f070 22%, #58d020 50%, #30a810 85%, #208808 100%)"></div>
<div class="cd b u" style="left:15px;top:2px">90A</div>
<div class="tl" style="top:15px;left:3.5px">10:40</div>
<svg class="flag" width="11" height="11" viewBox="0 0 11 11"><defs><linearGradient id="flg" x1="1" y1="0" x2="0.5" y2="0.5"><stop offset="0" stop-color="#ff0000"/><stop offset="0.7" stop-color="#ff1010"/><stop offset="1" stop-color="#ffd0d0"/></linearGradient></defs><path d="M0 0 H9 Q11 0 11 2 V11 Z" fill="url(#flg)"/></svg>
</div>
<div class="a" style="left:0;top:271px;width:126px;height:81px;background:#3c93b1"></div>
<div class="a" style="left:1px;top:352px;width:125px;height:1px;background:#d0dde4"></div>
<div class="a" style="left:0;top:271px;width:126px;height:1px;background:#1f8db3"></div>
<svg class="a" style="left:3px;top:273px" width="32" height="36" viewBox="0 0 32 36"><defs><clipPath id="cpp3"><rect width="32" height="36" rx="4"/></clipPath><filter id="blp3" x="-10%" y="-10%" width="120%" height="120%"><feGaussianBlur stdDeviation="0.9"/></filter></defs><g clip-path="url(#cpp3)"><g filter="url(#blp3)"><rect x="-2" y="-2" width="36" height="40" fill="#c0bebc"/><ellipse cx="16" cy="9" rx="13" ry="9" fill="#3a3028"/><ellipse cx="16" cy="20" rx="11" ry="14" fill="#c09a7e"/><ellipse cx="16" cy="18" rx="8" ry="9" fill="#d0a888"/><ellipse cx="11.5" cy="17" rx="2.4" ry="1" fill="#4a3830"/><ellipse cx="20.5" cy="17" rx="2.4" ry="1" fill="#4a3830"/><ellipse cx="16" cy="25" rx="4" ry="1.4" fill="#9a7060"/><rect x="0" y="33" width="32" height="5" fill="#a8a4a8"/></g></g></svg>
<div class="a" style="left:2px;top:310px;color:#fff;font-size:10.6px;line-height:13px;white-space:nowrap;-webkit-text-stroke:0.2px #fff">Bart Kyle<br>5</div>
<div class="c" style="left:126px;top:271px;background:#fff">
<div class="cd g u" style="left:0px;top:1px">01A</div>
<div class="tl" style="top:14px;left:2.5px">08:17</div>
<div class="tl" style="top:27px;left:2.5px">17:08</div>
</div>
<div class="c" style="left:174px;top:271px;background:#e3e3e3">
<div class="cd b u" style="left:0px;top:1px">90A</div>
</div>
<div class="c" style="left:222px;top:271px;background:#e3e3e3">
<div class="cd b u" style="left:0px;top:1px">90A</div>
</div>
<div class="c" style="left:270px;top:271px;background:#fff">
<div class="cd g" style="left:0px;top:1px">01A</div>
<div class="tl" style="top:14px;left:2.5px">08:18</div>
<div class="tl" style="top:27px;left:2.5px">17:09</div>
</div>
<div class="c" style="left:318px;top:271px;background:#fff">
<div class="cd g" style="left:0px;top:1px">01A</div>
<div class="tl" style="top:14px;left:2.5px">08:19</div>
<div class="tl" style="top:27px;left:2.5px">17:10</div>
</div>
<div class="c" style="left:366px;top:271px;background:#fff">
<div class="cd g" style="left:0px;top:1px">01A</div>
<div class="tl" style="top:14px;left:2.5px">08:20</div>
<div class="tl" style="top:27px;left:2.5px">17:11</div>
</div>
<div class="c" style="left:414px;top:271px;background:#fff">
<div class="cd g u" style="left:0px;top:1px">01A</div>
<div class="tl" style="top:14px;left:2.5px">08:21</div>
<div class="tl" style="top:27px;left:2.5px">17:12</div>
</div>
<div class="c" style="left:462px;top:271px;background:#fff">
<div class="cd g u" style="left:0px;top:1px">01A</div>
<div class="tl" style="top:14px;left:2.5px">08:22</div>
<div class="tl" style="top:27px;left:2.5px">17:13</div>
</div>
<div class="c" style="left:510px;top:271px;background:#e3e3e3">
<div class="cd b u" style="left:0px;top:1px">90A</div>
</div>
<div class="c" style="left:558px;top:271px;background:#e3e3e3">
<div class="cd b u" style="left:0px;top:1px">90A</div>
</div>
<div class="c" style="left:606px;top:271px;background:#fff">
<div class="cd g" style="left:0px;top:1px">01A</div>
<div class="tl" style="top:14px;left:2.5px">08:23</div>
<div class="tl" style="top:27px;left:2.5px">18:14</div>
</div>
<div class="c" style="left:654px;top:271px;background:#fff">
<div class="cd g" style="left:0px;top:1px">01A</div>
<div class="tl" style="top:14px;left:2.5px">08:24</div>
<div class="tl" style="top:27px;left:2.5px">18:15</div>
</div>
<div class="c" style="left:702px;top:271px;background:#fff">
<div class="cd g" style="left:0px;top:1px">01A</div>
<div class="tl" style="top:14px;left:2.5px">08:25</div>
<div class="tl" style="top:27px;left:2.5px">18:16</div>
</div>
<div class="c" style="left:750px;top:271px;background:#fff">
<div class="cd g u" style="left:0px;top:1px">01A</div>
<div class="tl" style="top:14px;left:2.5px">08:26</div>
<div class="tl" style="top:27px;left:2.5px">18:17</div>
</div>
<div class="c" style="left:798px;top:271px;background:#fff">
<div class="cd g u" style="left:0px;top:1px">01A</div>
<div class="tl" style="top:14px;left:2.5px">08:27</div>
<div class="tl" style="top:27px;left:2.5px">18:18</div>
</div>
<div class="c" style="left:846px;top:271px;background:#e3e3e3">
<div class="cd b u" style="left:0px;top:1px">90A</div>
</div>
<div class="c" style="left:894px;top:271px;background:#e3e3e3">
<div class="cd b u" style="left:0px;top:1px">90A</div>
</div>
<div class="c" style="left:942px;top:271px;background:#fff">
<div class="cd g" style="left:0px;top:1px">01A</div>
<div class="tl" style="top:14px;left:2.5px">08:28</div>
<div class="tl" style="top:27px;left:2.5px">18:19</div>
</div>
<div class="c" style="left:990px;top:271px;background:#fff">
<div class="cd g" style="left:0px;top:1px">01A</div>
<div class="tl" style="top:14px;left:2.5px">08:29</div>
<div class="tl" style="top:27px;left:2.5px">18:20</div>
</div>
<div class="c" style="left:1038px;top:271px;background:#fff">
<div class="cd g" style="left:0px;top:1px">01A</div>
<div class="tl" style="top:14px;left:2.5px">08:30</div>
<div class="tl" style="top:27px;left:2.5px">18:21</div>
</div>
<div class="c" style="left:1086px;top:271px;background:#fff">
<div class="cd g u" style="left:0px;top:1px">01A</div>
<div class="tl" style="top:14px;left:2.5px">08:31</div>
<div class="tl" style="top:27px;left:2.5px">18:22</div>
</div>
<div class="c" style="left:1134px;top:271px;background:#fff">
<div class="cd g u" style="left:0px;top:1px">01A</div>
<div class="tl" style="top:14px;left:2.5px">08:32</div>
<div class="tl" style="top:27px;left:2.5px">18:23</div>
</div>
<div class="c" style="left:1182px;top:271px;background:#e3e3e3">
<div class="cd b u" style="left:0px;top:1px">90A</div>
</div>
<div class="c" style="left:1230px;top:271px;background:#e3e3e3">
<div class="cd b u" style="left:0px;top:1px">90A</div>
</div>
<div class="c" style="left:1278px;top:271px;background:#fff">
<div class="cd g" style="left:0px;top:1px">01A</div>
<div class="tl" style="top:14px;left:2.5px">08:33</div>
<div class="tl" style="top:27px;left:2.5px">18:24</div>
</div>
<div class="c" style="left:1326px;top:271px;background:#fff">
<div class="cd g" style="left:0px;top:1px">01A</div>
<div class="tl" style="top:14px;left:2.5px">08:34</div>
<div class="tl" style="top:27px;left:2.5px">18:25</div>
</div>
<div class="c" style="left:1374px;top:271px;background:#fff">
<div class="cd g" style="left:0px;top:1px">01A</div>
<div class="tl" style="top:14px;left:2.5px">12:56</div>
<div class="tl" style="top:27px;left:2.5px">18:26</div>
<div class="leaf" style="left:1.5px;top:40.5px;background:#800000"></div>
<div class="tl" style="left:16.7px;top:40px;font-size:10.5px">BT</div>
</div>
<div class="c" style="left:1422px;top:271px;background:#fff">
<div class="cd g u" style="left:0px;top:1px">01A</div>
<div class="tl" style="top:14px;left:2.5px">08:36</div>
<div class="tl" style="top:27px;left:2.5px">18:27</div>
</div>
<div class="c" style="left:1470px;top:271px;background:#fff">
<div class="cd g u" style="left:0px;top:1px">01A</div>
<div class="tl" style="top:14px;left:2.5px">08:37</div>
<div class="tl" style="top:27px;left:2.5px">18:28</div>
</div>
<div class="c" style="left:1518px;top:271px;background:#feeac6">
<div class="ball" style="left:0px;top:1px;background:radial-gradient(circle at 50% 22%, #ffe0e0 0%, #ff6060 22%, #f01010 50%, #c00000 85%, #a00000 100%)"></div>
<div class="cd b u" style="left:14px;top:1px">90A</div>
</div>
<div class="a" style="left:0;top:353px;width:126px;height:81px;background:#3c93b1"></div>
<div class="a" style="left:1px;top:434px;width:125px;height:1px;background:#d0dde4"></div>
<div class="a" style="left:0;top:353px;width:126px;height:1px;background:#1f8db3"></div>
<svg class="a" style="left:3px;top:355px" width="32" height="36" viewBox="0 0 32 36"><defs><clipPath id="cpp4"><rect width="32" height="36" rx="4"/></clipPath><filter id="blp4" x="-10%" y="-10%" width="120%" height="120%"><feGaussianBlur stdDeviation="0.9"/></filter></defs><g clip-path="url(#cpp4)"><g filter="url(#blp4)"><rect x="-2" y="-2" width="36" height="40" fill="#8a7c74"/><ellipse cx="16" cy="8" rx="13" ry="9" fill="#45362c"/><ellipse cx="16" cy="20" rx="10.5" ry="13" fill="#d4a48a"/><ellipse cx="16" cy="18" rx="7" ry="8" fill="#e2b498"/><ellipse cx="11.5" cy="17" rx="2.4" ry="1" fill="#4a3830"/><ellipse cx="20.5" cy="17" rx="2.4" ry="1" fill="#4a3830"/><ellipse cx="16" cy="25" rx="3.5" ry="1.2" fill="#b87a70"/><path d="M-2 38 L0 30 Q8 28 16 33 Q24 28 32 30 L34 38 Z" fill="#3a3234"/></g></g></svg>
<div class="a" style="left:2px;top:392px;color:#fff;font-size:10.6px;line-height:13px;white-space:nowrap;-webkit-text-stroke:0.2px #fff">Bruno Johns<br>1</div>
<div class="c" style="left:126px;top:353px;background:#fff">
<div class="cd g u" style="left:0px;top:1px">01A</div>
<div class="tl" style="top:14px;left:2.5px">08:30</div>
<div class="tl" style="top:27px;left:2.5px">17:24</div>
</div>
<div class="c" style="left:174px;top:353px;background:#e3e3e3">
<div class="cd b u" style="left:1px;top:2px">90A</div>
<div class="tl u" style="top:15px;left:3.5px">08:35</div>
<div class="tl bu" style="top:28px;left:3.5px">17:50</div>
<svg class="flag" width="11" height="11" viewBox="0 0 11 11"><defs><linearGradient id="flg" x1="1" y1="0" x2="0.5" y2="0.5"><stop offset="0" stop-color="#ff0000"/><stop offset="0.7" stop-color="#ff1010"/><stop offset="1" stop-color="#ffd0d0"/></linearGradient></defs><path d="M0 0 H9 Q11 0 11 2 V11 Z" fill="url(#flg)"/></svg>
</div>
<div class="c" style="left:222px;top:353px;background:#e3e3e3">
<div class="cd b u" style="left:1px;top:2px">90A</div>
<div class="tl u" style="top:15px;left:3.5px">09:36</div>
<div class="tl bu" style="top:28px;left:3.5px">18:30</div>
<svg class="flag" width="11" height="11" viewBox="0 0 11 11"><defs><linearGradient id="flg" x1="1" y1="0" x2="0.5" y2="0.5"><stop offset="0" stop-color="#ff0000"/><stop offset="0.7" stop-color="#ff1010"/><stop offset="1" stop-color="#ffd0d0"/></linearGradient></defs><path d="M0 0 H9 Q11 0 11 2 V11 Z" fill="url(#flg)"/></svg>
</div>
<div class="c" style="left:270px;top:353px;background:#fff">
<div class="cd g" style="left:0px;top:1px">01A</div>
<div class="tl" style="top:14px;left:2.5px">08:31</div>
<div class="tl" style="top:27px;left:2.5px">17:25</div>
</div>
<div class="c" style="left:318px;top:353px;background:#fff">
<div class="cd g" style="left:0px;top:1px">01A</div>
<div class="tl" style="top:14px;left:2.5px">08:32</div>
<div class="tl" style="top:27px;left:2.5px">17:26</div>
</div>
<div class="c" style="left:366px;top:353px;background:#fff">
<div class="cd g" style="left:0px;top:1px">01A</div>
<div class="tl" style="top:14px;left:2.5px">08:33</div>
<div class="tl" style="top:27px;left:2.5px">17:27</div>
</div>
<div class="c" style="left:414px;top:353px;background:#fff">
<div class="cd g u" style="left:0px;top:1px">01A</div>
<div class="tl" style="top:14px;left:2.5px">08:34</div>
<div class="tl" style="top:27px;left:2.5px">17:28</div>
</div>
<div class="c" style="left:462px;top:353px;background:#fff">
<div class="cd g u" style="left:0px;top:1px">01A</div>
<div class="tl" style="top:14px;left:2.5px">08:35</div>
<div class="tl" style="top:27px;left:2.5px">17:29</div>
</div>
<div class="c" style="left:510px;top:353px;background:#e3e3e3">
<div class="cd b u" style="left:1px;top:2px">90A</div>
<div class="tl u" style="top:15px;left:3.5px">09:45</div>
<div class="tl u" style="top:28px;left:3.5px">17:50</div>
<svg class="flag" width="11" height="11" viewBox="0 0 11 11"><defs><linearGradient id="flg" x1="1" y1="0" x2="0.5" y2="0.5"><stop offset="0" stop-color="#ff0000"/><stop offset="0.7" stop-color="#ff1010"/><stop offset="1" stop-color="#ffd0d0"/></linearGradient></defs><path d="M0 0 H9 Q11 0 11 2 V11 Z" fill="url(#flg)"/></svg>
</div>
<div class="c" style="left:558px;top:353px;background:#e3e3e3">
<div class="cd b u" style="left:0px;top:1px">90A</div>
</div>
<div class="c" style="left:606px;top:353px;background:#fff">
<div class="cd g" style="left:0px;top:1px">01A</div>
<div class="tl" style="top:14px;left:2.5px">08:36</div>
<div class="tl" style="top:27px;left:2.5px">17:30</div>
</div>
<div class="c" style="left:654px;top:353px;background:#fff">
<div class="cd g" style="left:0px;top:1px">01A</div>
<div class="tl" style="top:14px;left:2.5px">08:37</div>
<div class="tl" style="top:27px;left:2.5px">17:31</div>
</div>
<div class="c" style="left:702px;top:353px;background:#fff">
<div class="cd g" style="left:0px;top:1px">01A</div>
<div class="tl" style="top:14px;left:2.5px">08:38</div>
<div class="tl" style="top:27px;left:2.5px">17:32</div>
</div>
<div class="c" style="left:750px;top:353px;background:#fff">
<div class="cd g u" style="left:0px;top:1px">01A</div>
<div class="tl" style="top:14px;left:2.5px">08:39</div>
<div class="tl" style="top:27px;left:2.5px">17:33</div>
</div>
<div class="c" style="left:798px;top:353px;background:#fff">
<div class="cd g u" style="left:0px;top:1px">01A</div>
<div class="tl" style="top:14px;left:2.5px">08:40</div>
<div class="tl" style="top:27px;left:2.5px">17:34</div>
</div>
<div class="c" style="left:846px;top:353px;background:#e3e3e3">
<div class="cd b u" style="left:1px;top:2px">90A</div>
<div class="tl u" style="top:15px;left:3.5px">09:00</div>
<div class="tl u" style="top:28px;left:3.5px">18:00</div>
<svg class="flag" width="11" height="11" viewBox="0 0 11 11"><defs><linearGradient id="flg" x1="1" y1="0" x2="0.5" y2="0.5"><stop offset="0" stop-color="#ff0000"/><stop offset="0.7" stop-color="#ff1010"/><stop offset="1" stop-color="#ffd0d0"/></linearGradient></defs><path d="M0 0 H9 Q11 0 11 2 V11 Z" fill="url(#flg)"/></svg>
</div>
<div class="c" style="left:894px;top:353px;background:#e3e3e3">
<div class="cd b u" style="left:0px;top:1px">90A</div>
</div>
<div class="c" style="left:942px;top:353px;background:#fff">
<div class="cd g" style="left:0px;top:1px">01A</div>
<div class="tl" style="top:14px;left:2.5px">08:41</div>
<div class="tl" style="top:27px;left:2.5px">17:35</div>
</div>
<div class="c" style="left:990px;top:353px;background:#fff">
<div class="cd g" style="left:0px;top:1px">01A</div>
<div class="leaf" style="left:1.5px;top:14.5px;background:#00e000"></div>
<div class="tl" style="left:16.7px;top:14px;font-size:10.5px">AH</div>
</div>
<div class="a" style="left:990px;top:353px;width:48px;height:82px;border:1px solid #ff6a1a"></div>
<div class="c" style="left:1038px;top:353px;background:#fff">
<div class="cd g" style="left:0px;top:1px">01A</div>
<div class="tl" style="top:14px;left:2.5px">08:43</div>
<div class="tl" style="top:27px;left:2.5px">17:37</div>
</div>
<div class="c" style="left:1086px;top:353px;background:#fff">
<div class="cd g u" style="left:0px;top:1px">01A</div>
<div class="tl" style="top:14px;left:2.5px">08:44</div>
<div class="tl" style="top:27px;left:2.5px">17:38</div>
</div>
<div class="c" style="left:1134px;top:353px;background:#fff">
<div class="cd g u" style="left:0px;top:1px">01A</div>
<div class="tl" style="top:14px;left:2.5px">08:45</div>
<div class="tl" style="top:27px;left:2.5px">17:39</div>
</div>
<div class="c" style="left:1182px;top:353px;background:#e3e3e3">
<div class="cd b u" style="left:1px;top:2px">90A</div>
<div class="tl bu" style="top:15px;left:3.5px">15:38</div>
<div class="tl u" style="top:28px;left:3.5px">18:30</div>
<svg class="flag" width="11" height="11" viewBox="0 0 11 11"><defs><linearGradient id="flg" x1="1" y1="0" x2="0.5" y2="0.5"><stop offset="0" stop-color="#ff0000"/><stop offset="0.7" stop-color="#ff1010"/><stop offset="1" stop-color="#ffd0d0"/></linearGradient></defs><path d="M0 0 H9 Q11 0 11 2 V11 Z" fill="url(#flg)"/></svg>
</div>
<div class="c" style="left:1230px;top:353px;background:#e3e3e3">
<div class="cd b u" style="left:1px;top:2px">90A</div>
<div class="tl bu" style="top:15px;left:3.5px">10:56</div>
<div class="tl bu" style="top:28px;left:3.5px">18:20</div>
<svg class="flag" width="11" height="11" viewBox="0 0 11 11"><defs><linearGradient id="flg" x1="1" y1="0" x2="0.5" y2="0.5"><stop offset="0" stop-color="#ff0000"/><stop offset="0.7" stop-color="#ff1010"/><stop offset="1" stop-color="#ffd0d0"/></linearGradient></defs><path d="M0 0 H9 Q11 0 11 2 V11 Z" fill="url(#flg)"/></svg>
</div>
<div class="c" style="left:1278px;top:353px;background:#fff">
<div class="cd g" style="left:1px;top:2px">01A</div>
<div class="tl bu" style="top:15px;left:3.5px">09:30</div>
<div class="tl" style="top:28px;left:3.5px">16:00</div>
<div class="tl bl" style="top:41px;left:3.5px">14:08</div>
<div class="tl bl" style="top:54px;left:3.5px">14:27</div>
<div class="leaf" style="left:2.5px;top:67.5px;background:#800080"></div>
<div class="tl" style="left:17.7px;top:67px;font-size:10.5px">AU</div>
<svg class="flag" width="11" height="11" viewBox="0 0 11 11"><defs><linearGradient id="flg" x1="1" y1="0" x2="0.5" y2="0.5"><stop offset="0" stop-color="#ff0000"/><stop offset="0.7" stop-color="#ff1010"/><stop offset="1" stop-color="#ffd0d0"/></linearGradient></defs><path d="M0 0 H9 Q11 0 11 2 V11 Z" fill="url(#flg)"/></svg>
</div>
<div class="c" style="left:1326px;top:353px;background:#fff">
<div class="cd g" style="left:1px;top:2px">01A</div>
<div class="tl u" style="top:15px;left:3.5px">08:30</div>
<div class="tl" style="top:28px;left:3.5px">10:04</div>
<svg class="flag" width="11" height="11" viewBox="0 0 11 11"><defs><linearGradient id="flg" x1="1" y1="0" x2="0.5" y2="0.5"><stop offset="0" stop-color="#ff0000"/><stop offset="0.7" stop-color="#ff1010"/><stop offset="1" stop-color="#ffd0d0"/></linearGradient></defs><path d="M0 0 H9 Q11 0 11 2 V11 Z" fill="url(#flg)"/></svg>
</div>
<div class="c" style="left:1374px;top:353px;background:#fff">
<div class="cd g" style="left:1px;top:2px">01A</div>
<svg class="flag" width="11" height="11" viewBox="0 0 11 11"><defs><linearGradient id="flg" x1="1" y1="0" x2="0.5" y2="0.5"><stop offset="0" stop-color="#ff0000"/><stop offset="0.7" stop-color="#ff1010"/><stop offset="1" stop-color="#ffd0d0"/></linearGradient></defs><path d="M0 0 H9 Q11 0 11 2 V11 Z" fill="url(#flg)"/></svg>
</div>
<div class="c" style="left:1422px;top:353px;background:#fff">
<div class="cd g u" style="left:1px;top:2px">01A</div>
<svg class="flag" width="11" height="11" viewBox="0 0 11 11"><defs><linearGradient id="flg" x1="1" y1="0" x2="0.5" y2="0.5"><stop offset="0" stop-color="#ff0000"/><stop offset="0.7" stop-color="#ff1010"/><stop offset="1" stop-color="#ffd0d0"/></linearGradient></defs><path d="M0 0 H9 Q11 0 11 2 V11 Z" fill="url(#flg)"/></svg>
</div>
<div class="c" style="left:1470px;top:353px;background:#fff">
<div class="cd g u" style="left:1px;top:2px">01A</div>
<svg class="flag" width="11" height="11" viewBox="0 0 11 11"><defs><linearGradient id="flg" x1="1" y1="0" x2="0.5" y2="0.5"><stop offset="0" stop-color="#ff0000"/><stop offset="0.7" stop-color="#ff1010"/><stop offset="1" stop-color="#ffd0d0"/></linearGradient></defs><path d="M0 0 H9 Q11 0 11 2 V11 Z" fill="url(#flg)"/></svg>
</div>
<div class="c" style="left:1518px;top:353px;background:#feeac6">
<div class="ball" style="left:1px;top:2px;background:radial-gradient(circle at 50% 22%, #f0fff0 0%, #a8f070 22%, #58d020 50%, #30a810 85%, #208808 100%)"></div>
<div class="cd b u" style="left:15px;top:2px">90A</div>
<div class="tl" style="top:15px;left:3.5px">14:47</div>
<div class="leaf" style="left:2.5px;top:28.5px;background:#800000"></div>
<div class="tl" style="left:17.7px;top:28px;font-size:10.5px">BT</div>
<svg class="flag" width="11" height="11" viewBox="0 0 11 11"><defs><linearGradient id="flg" x1="1" y1="0" x2="0.5" y2="0.5"><stop offset="0" stop-color="#ff0000"/><stop offset="0.7" stop-color="#ff1010"/><stop offset="1" stop-color="#ffd0d0"/></linearGradient></defs><path d="M0 0 H9 Q11 0 11 2 V11 Z" fill="url(#flg)"/></svg>
</div>
<div class="a" style="left:0;top:435px;width:126px;height:81px;background:#3c93b1"></div>
<div class="a" style="left:1px;top:516px;width:125px;height:1px;background:#d0dde4"></div>
<div class="a" style="left:0;top:435px;width:126px;height:1px;background:#1f8db3"></div>
<svg class="a" style="left:3px;top:437px" width="32" height="36" viewBox="0 0 32 36"><defs><clipPath id="cpp5"><rect width="32" height="36" rx="4"/></clipPath><filter id="blp5" x="-10%" y="-10%" width="120%" height="120%"><feGaussianBlur stdDeviation="0.9"/></filter></defs><g clip-path="url(#cpp5)"><g filter="url(#blp5)"><rect x="-2" y="-2" width="36" height="40" fill="#c49866"/><ellipse cx="16" cy="10" rx="16" ry="12" fill="#d2aa78"/><ellipse cx="16" cy="19" rx="11" ry="14" fill="#eec2a0"/><ellipse cx="15" cy="16" rx="8" ry="8" fill="#f6d0b4"/><ellipse cx="10.5" cy="17" rx="2.4" ry="1" fill="#6a7080"/><ellipse cx="20.5" cy="17" rx="2.4" ry="1" fill="#6a7080"/><ellipse cx="16" cy="25" rx="3.5" ry="1.3" fill="#d08a80"/><path d="M-2 38 L-2 26 Q3 30 5 38 Z" fill="#f8f0e8"/><path d="M28 10 Q34 20 30 34 L34 34 L34 8 Z" fill="#a87a48"/></g></g></svg>
<div class="a" style="left:2px;top:474px;color:#fff;font-size:10.6px;line-height:13px;white-space:nowrap;-webkit-text-stroke:0.2px #fff">Constanza Richard<br>16</div>
<div class="c" style="left:126px;top:435px;background:#fff">
<div class="cd g u" style="left:0px;top:1px">01A</div>
<div class="tl" style="top:14px;left:2.5px">08:40</div>
<div class="tl" style="top:27px;left:2.5px">17:56</div>
</div>
<div class="c" style="left:174px;top:435px;background:#e3e3e3">
<div class="cd b u" style="left:0px;top:1px">90A</div>
</div>
<div class="c" style="left:222px;top:435px;background:#e3e3e3">
<div class="cd b u" style="left:0px;top:1px">90A</div>
</div>
<div class="c" style="left:270px;top:435px;background:#fff">
<div class="cd g" style="left:0px;top:1px">01A</div>
<div class="tl" style="top:14px;left:2.5px">08:41</div>
<div class="tl" style="top:27px;left:2.5px">17:57</div>
</div>
<div class="c" style="left:318px;top:435px;background:#fff">
<div class="cd g" style="left:0px;top:1px">01A</div>
<div class="tl" style="top:14px;left:2.5px">08:42</div>
<div class="tl" style="top:27px;left:2.5px">17:58</div>
</div>
<div class="c" style="left:366px;top:435px;background:#fff">
<div class="cd g" style="left:0px;top:1px">01A</div>
<div class="tl" style="top:14px;left:2.5px">08:43</div>
<div class="tl" style="top:27px;left:2.5px">17:59</div>
</div>
<div class="c" style="left:414px;top:435px;background:#fff">
<div class="cd g u" style="left:0px;top:1px">01A</div>
<div class="tl" style="top:14px;left:2.5px">08:44</div>
<div class="tl" style="top:27px;left:2.5px">18:00</div>
</div>
<div class="c" style="left:462px;top:435px;background:#fff">
<div class="cd g u" style="left:0px;top:1px">01A</div>
<div class="tl" style="top:14px;left:2.5px">08:45</div>
<div class="tl" style="top:27px;left:2.5px">18:01</div>
</div>
<div class="c" style="left:510px;top:435px;background:#e3e3e3">
<div class="cd b u" style="left:0px;top:1px">90A</div>
</div>
<div class="c" style="left:558px;top:435px;background:#e3e3e3">
<div class="cd b u" style="left:0px;top:1px">90A</div>
</div>
<div class="c" style="left:606px;top:435px;background:#fff">
<div class="cd g" style="left:0px;top:1px">01A</div>
<div class="tl" style="top:14px;left:2.5px">08:46</div>
<div class="tl" style="top:27px;left:2.5px">18:02</div>
</div>
<div class="c" style="left:654px;top:435px;background:#fff">
<div class="cd g" style="left:0px;top:1px">01A</div>
<div class="tl" style="top:14px;left:2.5px">08:47</div>
<div class="tl" style="top:27px;left:2.5px">18:03</div>
</div>
<div class="c" style="left:702px;top:435px;background:#fff">
<div class="cd g" style="left:0px;top:1px">01A</div>
<div class="tl" style="top:14px;left:2.5px">08:48</div>
<div class="tl" style="top:27px;left:2.5px">18:04</div>
</div>
<div class="c" style="left:750px;top:435px;background:#fff">
<div class="cd g u" style="left:0px;top:1px">01A</div>
<div class="tl" style="top:14px;left:2.5px">08:49</div>
<div class="tl" style="top:27px;left:2.5px">18:05</div>
</div>
<div class="c" style="left:798px;top:435px;background:#fff">
<div class="cd g u" style="left:0px;top:1px">01A</div>
<div class="tl" style="top:14px;left:2.5px">08:50</div>
<div class="tl" style="top:27px;left:2.5px">18:06</div>
</div>
<div class="c" style="left:846px;top:435px;background:#e3e3e3">
<div class="cd b u" style="left:0px;top:1px">90A</div>
</div>
<div class="c" style="left:894px;top:435px;background:#e3e3e3">
<div class="cd b u" style="left:0px;top:1px">90A</div>
</div>
<div class="c" style="left:942px;top:435px;background:#fff">
<div class="cd g" style="left:0px;top:1px">01A</div>
<div class="tl" style="top:14px;left:2.5px">08:51</div>
<div class="tl" style="top:27px;left:2.5px">18:07</div>
</div>
<div class="c" style="left:990px;top:435px;background:#fff">
<div class="cd g" style="left:0px;top:1px">01A</div>
<div class="tl" style="top:14px;left:2.5px">08:52</div>
<div class="tl" style="top:27px;left:2.5px">18:08</div>
</div>
<div class="c" style="left:1038px;top:435px;background:#fff">
<div class="cd g" style="left:0px;top:1px">01A</div>
<div class="tl" style="top:14px;left:2.5px">08:53</div>
<div class="tl" style="top:27px;left:2.5px">18:09</div>
</div>
<div class="c" style="left:1086px;top:435px;background:#fff">
<div class="cd g u" style="left:0px;top:1px">01A</div>
<div class="tl" style="top:14px;left:2.5px">08:54</div>
<div class="tl" style="top:27px;left:2.5px">18:10</div>
</div>
<div class="c" style="left:1134px;top:435px;background:#fff">
<div class="cd g u" style="left:0px;top:1px">01A</div>
<div class="tl" style="top:14px;left:2.5px">08:55</div>
<div class="tl" style="top:27px;left:2.5px">18:11</div>
</div>
<div class="c" style="left:1182px;top:435px;background:#e3e3e3">
<div class="cd b u" style="left:0px;top:1px">90A</div>
</div>
<div class="c" style="left:1230px;top:435px;background:#e3e3e3">
<div class="cd b u" style="left:0px;top:1px">90A</div>
</div>
<div class="c" style="left:1278px;top:435px;background:#fff">
<div class="cd g" style="left:0px;top:1px">01A</div>
<div class="tl" style="top:14px;left:2.5px">08:56</div>
<div class="tl" style="top:27px;left:2.5px">18:12</div>
</div>
<div class="c" style="left:1326px;top:435px;background:#fff">
<div class="cd g" style="left:0px;top:1px">01A</div>
<div class="tl" style="top:14px;left:2.5px">08:57</div>
<div class="tl" style="top:27px;left:2.5px">18:13</div>
</div>
<div class="c" style="left:1374px;top:435px;background:#fff">
<div class="cd g" style="left:0px;top:1px">01A</div>
<div class="tl" style="top:14px;left:2.5px">08:58</div>
<div class="tl" style="top:27px;left:2.5px">18:14</div>
</div>
<div class="c" style="left:1422px;top:435px;background:#fff">
<div class="cd g u" style="left:0px;top:1px">01A</div>
<div class="tl" style="top:14px;left:2.5px">08:59</div>
<div class="tl" style="top:27px;left:2.5px">18:15</div>
</div>
<div class="c" style="left:1470px;top:435px;background:#fff">
<div class="cd g u" style="left:1px;top:2px">01A</div>
<div class="tl" style="top:15px;left:3.5px">12:54</div>
<div class="tl" style="top:28px;left:3.5px">18:16</div>
<svg class="flag" width="11" height="11" viewBox="0 0 11 11"><defs><linearGradient id="flg" x1="1" y1="0" x2="0.5" y2="0.5"><stop offset="0" stop-color="#ff0000"/><stop offset="0.7" stop-color="#ff1010"/><stop offset="1" stop-color="#ffd0d0"/></linearGradient></defs><path d="M0 0 H9 Q11 0 11 2 V11 Z" fill="url(#flg)"/></svg>
</div>
<div class="c" style="left:1518px;top:435px;background:#feeac6">
<div class="ball" style="left:0px;top:1px;background:radial-gradient(circle at 50% 22%, #ffe0e0 0%, #ff6060 22%, #f01010 50%, #c00000 85%, #a00000 100%)"></div>
<div class="cd b u" style="left:14px;top:1px">90A</div>
</div>
<div class="a" style="left:0;top:517px;width:126px;height:81px;background:#3c93b1"></div>
<div class="a" style="left:1px;top:598px;width:125px;height:1px;background:#d0dde4"></div>
<div class="a" style="left:0;top:517px;width:126px;height:1px;background:#1f8db3"></div>
<svg class="a" style="left:3px;top:519px" width="32" height="36" viewBox="0 0 32 36"><defs><clipPath id="cpp6"><rect width="32" height="36" rx="4"/></clipPath><filter id="blp6" x="-10%" y="-10%" width="120%" height="120%"><feGaussianBlur stdDeviation="0.9"/></filter></defs><g clip-path="url(#cpp6)"><g filter="url(#blp6)"><rect x="-2" y="-2" width="36" height="40" fill="#c8b89c"/><ellipse cx="16" cy="6" rx="10" ry="6" fill="#2a2220"/><path d="M-2 38 L-2 22 Q4 18 9 24 L14 38 Z" fill="#241c1a"/><path d="M34 38 L34 20 Q28 16 23 24 L19 38 Z" fill="#2a2220"/><ellipse cx="16" cy="17" rx="9" ry="12" fill="#7a4a32"/><ellipse cx="16" cy="15" rx="6" ry="6" fill="#8a5a3c"/><ellipse cx="12" cy="14.5" rx="2.2" ry="0.9" fill="#2a1a14"/><ellipse cx="20" cy="14.5" rx="2.2" ry="0.9" fill="#2a1a14"/><ellipse cx="16" cy="22" rx="3" ry="1.1" fill="#6a3a30"/><path d="M9 38 L13 27 L19 27 L23 38 Z" fill="#b0aeae"/></g></g></svg>
<div class="a" style="left:2px;top:556px;color:#fff;font-size:10.6px;line-height:13px;white-space:nowrap;-webkit-text-stroke:0.2px #fff">David Triggs<br>6</div>
<div class="c" style="left:126px;top:517px;background:#fff">
<div class="cd g u" style="left:0px;top:1px">01A</div>
<div class="tl" style="top:14px;left:2.5px">08:14</div>
<div class="tl" style="top:27px;left:2.5px">17:54</div>
</div>
<div class="c" style="left:174px;top:517px;background:#e3e3e3">
<div class="cd b u" style="left:0px;top:1px">90A</div>
</div>
<div class="c" style="left:222px;top:517px;background:#e3e3e3">
<div class="cd b u" style="left:0px;top:1px">90A</div>
</div>
<div class="c" style="left:270px;top:517px;background:#fff">
<div class="cd g" style="left:0px;top:1px">01A</div>
<div class="tl" style="top:14px;left:2.5px">08:15</div>
<div class="tl" style="top:27px;left:2.5px">17:55</div>
</div>
<div class="c" style="left:318px;top:517px;background:#fff">
<div class="cd g" style="left:0px;top:1px">01A</div>
<div class="tl" style="top:14px;left:2.5px">08:16</div>
<div class="tl" style="top:27px;left:2.5px">17:56</div>
</div>
<div class="c" style="left:366px;top:517px;background:#fff">
<div class="cd g" style="left:0px;top:1px">01A</div>
<div class="tl" style="top:14px;left:2.5px">08:17</div>
<div class="tl" style="top:27px;left:2.5px">17:57</div>
</div>
<div class="c" style="left:414px;top:517px;background:#fff">
<div class="cd g u" style="left:0px;top:1px">01A</div>
<div class="tl" style="top:14px;left:2.5px">08:18</div>
<div class="tl" style="top:27px;left:2.5px">17:58</div>
</div>
<div class="c" style="left:462px;top:517px;background:#fff">
<div class="cd g u" style="left:0px;top:1px">01A</div>
<div class="tl" style="top:14px;left:2.5px">08:19</div>
<div class="tl" style="top:27px;left:2.5px">17:59</div>
</div>
<div class="c" style="left:510px;top:517px;background:#e3e3e3">
<div class="cd b u" style="left:0px;top:1px">90A</div>
</div>
<div class="c" style="left:558px;top:517px;background:#e3e3e3">
<div class="cd b u" style="left:0px;top:1px">90A</div>
</div>
<div class="c" style="left:606px;top:517px;background:#fff">
<div class="cd g" style="left:0px;top:1px">01A</div>
<div class="tl" style="top:14px;left:2.5px">08:20</div>
<div class="tl" style="top:27px;left:2.5px">18:06</div>
</div>
<div class="c" style="left:654px;top:517px;background:#fff">
<div class="cd g" style="left:0px;top:1px">01A</div>
<div class="tl" style="top:14px;left:2.5px">08:21</div>
<div class="tl" style="top:27px;left:2.5px">18:07</div>
</div>
<div class="c" style="left:702px;top:517px;background:#fff">
<div class="cd g" style="left:0px;top:1px">01A</div>
<div class="tl" style="top:14px;left:2.5px">08:22</div>
<div class="tl" style="top:27px;left:2.5px">18:08</div>
</div>
<div class="c" style="left:750px;top:517px;background:#fff">
<div class="cd g u" style="left:0px;top:1px">01A</div>
<div class="tl" style="top:14px;left:2.5px">08:23</div>
<div class="tl" style="top:27px;left:2.5px">18:09</div>
</div>
<div class="c" style="left:798px;top:517px;background:#fff">
<div class="cd g u" style="left:0px;top:1px">01A</div>
<div class="tl" style="top:14px;left:2.5px">08:24</div>
<div class="tl" style="top:27px;left:2.5px">18:10</div>
</div>
<div class="c" style="left:846px;top:517px;background:#e3e3e3">
<div class="cd b u" style="left:0px;top:1px">90A</div>
</div>
<div class="c" style="left:894px;top:517px;background:#e3e3e3">
<div class="cd b u" style="left:0px;top:1px">90A</div>
</div>
<div class="c" style="left:942px;top:517px;background:#fff">
<div class="cd g" style="left:0px;top:1px">01A</div>
<div class="tl" style="top:14px;left:2.5px">08:25</div>
<div class="tl" style="top:27px;left:2.5px">18:11</div>
</div>
<div class="c" style="left:990px;top:517px;background:#fff">
<div class="cd g" style="left:0px;top:1px">01A</div>
<div class="tl" style="top:14px;left:2.5px">08:26</div>
<div class="tl" style="top:27px;left:2.5px">18:12</div>
</div>
<div class="c" style="left:1038px;top:517px;background:#fff">
<div class="cd g" style="left:0px;top:1px">01A</div>
<div class="tl" style="top:14px;left:2.5px">08:27</div>
<div class="tl" style="top:27px;left:2.5px">18:13</div>
</div>
<div class="c" style="left:1086px;top:517px;background:#fff">
<div class="cd g u" style="left:0px;top:1px">01A</div>
<div class="tl" style="top:14px;left:2.5px">08:28</div>
<div class="tl" style="top:27px;left:2.5px">18:14</div>
</div>
<div class="c" style="left:1134px;top:517px;background:#fff">
<div class="cd g u" style="left:0px;top:1px">01A</div>
<div class="tl" style="top:14px;left:2.5px">08:29</div>
<div class="tl" style="top:27px;left:2.5px">18:15</div>
</div>
<div class="c" style="left:1182px;top:517px;background:#e3e3e3">
<div class="cd b u" style="left:0px;top:1px">90A</div>
</div>
<div class="c" style="left:1230px;top:517px;background:#e3e3e3">
<div class="cd b u" style="left:0px;top:1px">90A</div>
</div>
<div class="c" style="left:1278px;top:517px;background:#fff">
<div class="cd g" style="left:0px;top:1px">01A</div>
<div class="tl" style="top:14px;left:2.5px">08:30</div>
<div class="tl" style="top:27px;left:2.5px">18:16</div>
</div>
<div class="c" style="left:1326px;top:517px;background:#fff">
<div class="cd g" style="left:0px;top:1px">01A</div>
<div class="tl" style="top:14px;left:2.5px">08:31</div>
<div class="tl" style="top:27px;left:2.5px">18:17</div>
</div>
<div class="c" style="left:1374px;top:517px;background:#fff">
<div class="cd g" style="left:0px;top:1px">01A</div>
<div class="tl" style="top:14px;left:2.5px">08:32</div>
<div class="tl" style="top:27px;left:2.5px">18:18</div>
</div>
<div class="c" style="left:1422px;top:517px;background:#fff">
<div class="cd g u" style="left:0px;top:1px">01A</div>
<div class="tl" style="top:14px;left:2.5px">08:33</div>
<div class="tl" style="top:27px;left:2.5px">18:19</div>
</div>
<div class="c" style="left:1470px;top:517px;background:#fff">
<div class="cd g u" style="left:0px;top:1px">01A</div>
<div class="tl" style="top:14px;left:2.5px">08:34</div>
<div class="tl" style="top:27px;left:2.5px">18:20</div>
</div>
<div class="c" style="left:1518px;top:517px;background:#feeac6">
<div class="ball" style="left:0px;top:1px;background:radial-gradient(circle at 50% 22%, #ffe0e0 0%, #ff6060 22%, #f01010 50%, #c00000 85%, #a00000 100%)"></div>
<div class="cd b u" style="left:14px;top:1px">90A</div>
</div>
<div class="a" style="left:126px;top:598px;width:1440px;height:2px;background:#dde6f3"></div>
<div class="a" style="left:0;top:598px;width:126px;height:1px;background:#c8dde8"></div>
<div class="a" style="left:0;top:599px;width:126px;height:1px;background:#2a88a8"></div>
<div class="a" style="left:0;top:107px;width:1px;height:492px;background:#1f8db3"></div>
<div class="a" style="left:1594px;top:62px;width:12px;height:468px;border-radius:3px;background:#d2d2d2"></div>
<svg class="a" style="left:5px;top:606px" width="200" height="14" viewBox="0 0 200 14">
<g fill="#d6d6d6" stroke="#b4b4b4" stroke-width="0.6">
<rect x="2" y="2" width="2" height="10"/><path d="M12 2 L5 7 L12 12 Z"/>
<path d="M31 2 L25 7 L31 12 Z"/>
<path d="M161 2 L167 7 L161 12 Z"/>
<path d="M181 2 L188 7 L181 12 Z"/><rect x="189" y="2" width="2" height="10"/>
</g></svg>
<div class="a" style="left:48px;top:606px;width:1px;height:14px;background:#99bbe8"></div>
<div class="a" style="left:154px;top:606px;width:1px;height:14px;background:#99bbe8"></div>
<div class="a" style="left:205px;top:606px;width:1px;height:14px;background:#99bbe8"></div>
<div class="a" style="left:234px;top:606px;width:1px;height:14px;background:#99bbe8"></div>
<div class="a" style="left:259px;top:606px;width:1px;height:14px;background:#99bbe8"></div>
<div class="a tb" style="left:57px;top:606px;line-height:14px;font-size:10.5px">Page</div>
<div class="a" style="left:89px;top:603px;width:30px;height:20px;border:1px solid #b2b7cc;background:#fff"></div>
<div class="a tb" style="left:93px;top:606px;line-height:14px;font-size:12px;color:#111">1</div>
<div class="a tb" style="left:127px;top:606px;line-height:14px;font-size:10.5px">of 1</div>
<svg class="a" style="left:212px;top:605px" width="16" height="16" viewBox="0 0 16 16"><path d="M3.5 4.5 Q7.5 -0.5 12 4" stroke="#1f6fd8" stroke-width="2.4" fill="none"/><path d="M8.5 7.5 L14.5 7.5 L14.5 1.8 Z" fill="#4a9ae8" stroke="#1f6fd8" stroke-width="0.8" stroke-linejoin="round"/><path d="M12.5 11.5 Q8.5 16.5 4 12" stroke="#1f6fd8" stroke-width="2.4" fill="none"/><path d="M7.5 8.5 L1.5 8.5 L1.5 14.2 Z" fill="#8ac4f4" stroke="#1f6fd8" stroke-width="0.8" stroke-linejoin="round"/></svg>
<div class="a" style="left:264px;top:606px;font-weight:bold;font-size:11.4px;line-height:14px;color:#111;white-space:nowrap">No calculation in progress</div>
<div class="a tb" style="left:1439px;top:606px;line-height:14px">Displaying employee(s) 1 - 7 of 7</div>
<div class="a" style="left:14px;top:629px;width:160px;height:4px;background:#a9cbee;border-top:1px solid #8fb8e8"></div>
<div class="a" style="left:0;top:632px;width:189px;height:23px;background:#fff;border:1px solid #d8d8d8;border-left:none;border-bottom:none;border-radius:0 4px 0 0"></div>
<div class="a" style="left:3px;top:637px;font-size:12px;line-height:14px;color:#555;white-space:nowrap">10.110.2.28/Astrow9/Astrow.aspx#</div>
<div class="a" style="left:1551px;top:633px;width:1px;height:14px;background:#99bbe8"></div>
<div class="a" style="left:1580px;top:633px;width:1px;height:14px;background:#99bbe8"></div>
<svg class="a" style="left:1559px;top:633px" width="14" height="13" viewBox="0 0 14 13"><path d="M2 2 L12 11 M12 2 L2 11" stroke="#e01818" stroke-width="3.2"/></svg>
<svg class="a" style="left:1589px;top:632px" width="13" height="16" viewBox="0 0 13 16"><defs><linearGradient id="mon" x1="0" y1="0" x2="0" y2="1"><stop offset="0" stop-color="#8cc0ec"/><stop offset="0.5" stop-color="#2a70c0"/><stop offset="1" stop-color="#062a6a"/></linearGradient></defs><rect x="0.5" y="0.5" width="12" height="10" fill="url(#mon)" stroke="#c8ccd0" stroke-width="0.8"/><rect x="5" y="10.5" width="3" height="2" fill="#444"/><path d="M2 15.5 L3 12.5 H10 L11 15.5 Z" fill="#c8ccd4" stroke="#666" stroke-width="0.6"/></svg>
<div class="a" style="left:1015px;top:142px;width:167px;height:512px;background:#fff;border:1px solid #a8cadb"></div>
<div class="a" style="left:1045px;top:143px;width:1px;height:510px;background:#e0e0e0"></div>
<div class="mi" style="top:151px">Add booking</div>
<svg class="a" style="left:1022px;top:150px" width="16" height="16" viewBox="0 0 16 16"><circle cx="8" cy="8" r="7.3" fill="#e8e8e8" stroke="#c8c8c8" stroke-width="0.8"/><circle cx="8" cy="8" r="5.6" fill="#d8eefc" stroke="#a8c8dc" stroke-width="0.6"/><path d="M4.8 7.5 L8 9 L11 7" stroke="#444" stroke-width="1.1" fill="none"/></svg>
<svg class="a" style="left:1167px;top:155px" width="6" height="8"><path d="M0 0 L5.5 4 L0 8 Z" fill="#3a8ad8"/></svg>
<div class="mi" style="top:176px">Add absence</div>
<svg class="a" style="left:1022px;top:175px" width="16" height="16" viewBox="0 0 16 16"><circle cx="11" cy="3" r="2.3" fill="#222"/><circle cx="11" cy="4.5" r="2" fill="#f2c8a8"/><path d="M7 13 Q7 7.5 11 7.5 Q15 7.5 15 13 Z" fill="#e01010"/><circle cx="5" cy="11" r="4.3" fill="#e01818" stroke="#555" stroke-width="1.2"/><path d="M2.8 10 L5 12 L7 10.5" stroke="#fff" stroke-width="0.9" fill="none"/></svg>
<div class="mi" style="top:201px">Absence operations</div>
<svg class="a" style="left:1022px;top:200px" width="16" height="16" viewBox="0 0 16 16"><circle cx="11" cy="3" r="2.3" fill="#222"/><circle cx="11" cy="4.5" r="2" fill="#f2c8a8"/><path d="M7 13 Q7 7.5 11 7.5 Q15 7.5 15 13 Z" fill="#e01010"/><circle cx="5" cy="11" r="4.3" fill="#e01818" stroke="#555" stroke-width="1.2"/><path d="M2.8 10 L5 12 L7 10.5" stroke="#fff" stroke-width="0.9" fill="none"/></svg>
<svg class="a" style="left:1167px;top:205px" width="6" height="8"><path d="M0 0 L5.5 4 L0 8 Z" fill="#3a8ad8"/></svg>
<div class="mi" style="top:226px">Counters corrections</div>
<svg class="a" style="left:1022px;top:225px" width="16" height="16" viewBox="0 0 16 16"><rect x="2.5" y="1.5" width="12" height="13" fill="#f2ead8" stroke="#c0a47c" stroke-width="0.9"/><rect x="3.5" y="2.5" width="10" height="11" fill="#e8eef4"/><g stroke="#9aa8bc" stroke-width="0.7"><path d="M5 4.5h7M5 6.5h7M5 8.5h7M5 10.5h7"/></g><path d="M4 8.5 L5.1 11 L7.8 11.2 L5.8 12.9 L6.5 15.5 L4 14.1 L1.5 15.5 L2.2 12.9 L0.2 11.2 L2.9 11 Z" fill="#f8c820" stroke="#d09a10" stroke-width="0.4"/></svg>
<svg class="a" style="left:1167px;top:230px" width="6" height="8"><path d="M0 0 L5.5 4 L0 8 Z" fill="#3a8ad8"/></svg>
<div class="mi" style="top:251px">Register department</div>
<svg class="a" style="left:1022px;top:250px" width="16" height="16" viewBox="0 0 16 16"><path d="M3 1 h7 l3 3 v11 h-10 z" fill="#f4f4f4" stroke="#c8c8c8" stroke-width="0.8"/><path d="M4 9 L8 6 L10 7" stroke="#e02020" stroke-width="1.8" fill="none"/><rect x="4" y="11" width="5" height="2" fill="#f0b040"/><circle cx="12" cy="12" r="2.5" fill="#e8f0f8" stroke="#8ab0d0" stroke-width="0.7"/></svg>
<div class="mi" style="top:276px">Send message</div>
<svg class="a" style="left:1022px;top:275px" width="16" height="16" viewBox="0 0 16 16"><ellipse cx="8" cy="7" rx="7" ry="6" fill="#3cb02c"/><ellipse cx="7" cy="5" rx="5" ry="3" fill="#8ee06a" opacity="0.7"/><path d="M4 11 L3 15.5 L8 12 Z" fill="#3cb02c"/><rect x="7" y="2.5" width="2" height="5.5" fill="#fff"/><rect x="7" y="9" width="2" height="2" fill="#fff"/></svg>
<div class="mi" style="top:301px">Add note</div>
<svg class="a" style="left:1022px;top:300px" width="16" height="16" viewBox="0 0 16 16"><path d="M3 3 L13 2 L14 13 L4 14.5 Z" fill="#3a82e8" stroke="#1a5ab8" stroke-width="0.6"/><path d="M3 3 L13 2 L13.3 5 L3.3 6 Z" fill="#2a3a5a"/><g fill="#fff"><rect x="4.5" y="3" width="1" height="2"/><rect x="7" y="2.8" width="1" height="2"/><rect x="9.5" y="2.6" width="1" height="2"/></g></svg>
<div class="mi" style="top:326px">Scheduler</div>
<svg class="a" style="left:1022px;top:325px" width="16" height="16" viewBox="0 0 16 16"><rect x="1" y="3" width="13" height="10" fill="#e8e8e8" stroke="#888" stroke-width="0.8"/><rect x="1" y="2" width="13" height="2.5" fill="#5ab04a"/><g stroke="#aaa" stroke-width="0.6"><path d="M1 7h13M1 10h13M5 4v9M9 4v9"/></g><circle cx="11.5" cy="12" r="3.5" fill="#3aa83a" stroke="#fff" stroke-width="0.8"/><path d="M10 12h3M11.5 10.5v3" stroke="#fff" stroke-width="1"/></svg>
<div class="mi" style="top:351px">Change day program</div>
<svg class="a" style="left:1022px;top:350px" width="16" height="16" viewBox="0 0 16 16"><rect x="1" y="2" width="14" height="12" fill="#d4d8dc" stroke="#a8b0b8" stroke-width="0.6"/><rect x="1" y="2" width="14" height="2.5" fill="#3a7ac8"/><path d="M2 12 Q4 7 10 7.5 L9 5.5 L13 8.5 L9 11 L10 9.2 Q5 9 2 12 Z" fill="#3aa04a"/></svg>
<div class="mi" style="top:376px">Change cycle</div>
<svg class="a" style="left:1022px;top:375px" width="16" height="16" viewBox="0 0 16 16"><path d="M2.5 6 A6 6 0 0 1 10 2.2" stroke="#3cc030" stroke-width="2.6" fill="none"/><path d="M9 0.5 L13 3 L9 5.5 Z" fill="#3cc030"/><path d="M13.5 10 A6 6 0 0 1 6 13.8" stroke="#3cc030" stroke-width="2.6" fill="none"/><path d="M7 15.5 L3 13 L7 10.5 Z" fill="#3cc030"/><circle cx="8" cy="8" r="4.2" fill="#f4f6f8" stroke="#7a8090" stroke-width="0.9"/><path d="M6 7 L8 8.3 L10 7" stroke="#556" stroke-width="0.8" fill="none"/></svg>
<div class="mi" style="top:401px">Recalculation</div>
<svg class="a" style="left:1022px;top:400px" width="16" height="16" viewBox="0 0 16 16"><circle cx="8" cy="8" r="6.8" fill="#dfeaf2" stroke="#243040" stroke-width="1.5"/><ellipse cx="6" cy="5.6" rx="1.6" ry="2" fill="#f0a020"/><ellipse cx="10" cy="10.4" rx="1.6" ry="2" fill="#f0a020"/><path d="M10.5 3.5 L5.5 12.5" stroke="#e89018" stroke-width="1.6"/></svg>
<div class="mi" style="top:426px">Rebuild holiday</div>
<svg class="a" style="left:1022px;top:425px" width="16" height="16" viewBox="0 0 16 16"><path d="M13 5.5 A6 6 0 1 0 13.5 10" stroke="#1a2030" stroke-width="2.8" fill="none"/><path d="M15.5 2 L15.5 8 L9.5 7 Z" fill="#3a5070"/></svg>
<div class="mi" style="top:451px">Reports</div>
<svg class="a" style="left:1022px;top:450px" width="16" height="16" viewBox="0 0 16 16"><g transform="translate(1 0.5)"><path d="M7 7.5 L4.78 13.61 A6.5 6.5 0 1 1 9.43 1.47 Z" fill="#2a6cc0"/><path d="M7 7.5 L9.43 1.47 A6.5 6.5 0 0 1 13.48 6.93 Z" fill="#39a43a"/><path d="M7.8 7.5 L14.28 6.93 A6.5 6.5 0 0 1 14.08 9.18 Z" fill="#e8292f"/><path d="M7 7.5 L13.28 9.18 A6.5 6.5 0 0 1 4.78 13.61 Z" fill="#f6c619"/></g></svg>
<svg class="a" style="left:1167px;top:455px" width="6" height="8"><path d="M0 0 L5.5 4 L0 8 Z" fill="#3a8ad8"/></svg>
<div class="a" style="left:1018px;top:472px;width:161px;height:1px;background:#e0e0e0"></div>
<div class="a" style="left:1045px;top:470px;width:1px;height:4px;background:#fff"></div>
<div class="mi" style="top:482px">View timecard</div>
<svg class="a" style="left:1022px;top:481px" width="16" height="16" viewBox="0 0 16 16"><path d="M2 1 h10 l2 2 v12 h-12 z" fill="#f0f4ec" stroke="#c8c8c8" stroke-width="0.6"/><rect x="3" y="3" width="10" height="3" fill="#6ab04a"/><g stroke="#b0d0a0" stroke-width="0.7"><path d="M3 8h10M3 10.5h10M3 13h10M7 6v8"/></g></svg>
<div class="a" style="left:1018px;top:501px;width:161px;height:25px;border:1px solid #8fb8e8;background:linear-gradient(#e3eefb,#cadcf3)"></div>
<div class="mi" style="top:507px">Yearly view</div>
<svg class="a" style="left:1022px;top:506px" width="16" height="16" viewBox="0 0 16 16"><rect x="1.5" y="1.5" width="13" height="13" fill="#fff" stroke="#999" stroke-width="0.8"/><rect x="1.5" y="1.5" width="13" height="3" fill="#3a8ae0"/><rect x="1.5" y="13" width="13" height="2" fill="#666"/><g fill="#f06020"><rect x="4" y="7" width="2" height="1.6"/><rect x="7" y="7" width="2" height="1.6"/><rect x="10" y="7" width="2" height="1.6"/><rect x="4" y="10" width="2" height="1.6"/><rect x="7" y="10" width="2" height="1.6"/><rect x="10" y="10" width="2" height="1.6"/></g></svg>
<div class="mi" style="top:532px">View holiday card</div>
<svg class="a" style="left:1022px;top:531px" width="16" height="16" viewBox="0 0 16 16"><path d="M10 15 L10.5 6" stroke="#6a4a20" stroke-width="1.5"/><path d="M10.5 6 Q7 3 4 5 M10.5 6 Q13 2 15.5 5 M10.5 6 Q9 1 6 1.5 M10.5 6 Q12 1 14 1.5" stroke="#2aa83a" stroke-width="1.8" fill="none"/><ellipse cx="8" cy="15" rx="7" ry="1.3" fill="#e8c880"/><circle cx="5.5" cy="11" r="4" fill="#f0d020"/><path d="M5.5 7 A4 4 0 0 0 1.5 11 L5.5 11 Z" fill="#e02020"/><path d="M5.5 11 L9.5 11 A4 4 0 0 0 5.5 7 Z" fill="#2a60d0"/></svg>
<div class="mi" style="top:557px">View anomalies</div>
<svg class="a" style="left:1022px;top:556px" width="16" height="16" viewBox="0 0 16 16"><circle cx="8" cy="8" r="7" fill="#e01818"/><circle cx="8" cy="8" r="4.8" fill="#fff"/><rect x="7" y="4.5" width="2" height="4.5" fill="#d01010"/><rect x="7" y="10" width="2" height="1.8" fill="#d01010"/></svg>
<div class="mi" style="top:582px">Daily view</div>
<svg class="a" style="left:1022px;top:581px" width="16" height="16" viewBox="0 0 16 16"><rect x="1.5" y="2.5" width="13" height="12.5" rx="1" fill="#fff" stroke="#777" stroke-width="0.8"/><rect x="1.5" y="2.5" width="13" height="3.5" fill="#3a7ac0"/><rect x="4" y="1" width="1.2" height="3" fill="#555"/><rect x="10.8" y="1" width="1.2" height="3" fill="#555"/><text x="8" y="13.5" font-size="7.5" font-weight="bold" text-anchor="middle" fill="#333" font-family="Liberation Sans">1</text></svg>
<div class="mi" style="top:607px">View files</div>
<svg class="a" style="left:1022px;top:606px" width="16" height="16" viewBox="0 0 16 16"><path d="M4 2 h7 l2 2 v5 h-9 z" fill="#fff" stroke="#bbb" stroke-width="0.6"/><rect x="1" y="6" width="14" height="9" rx="1" fill="#f5c850" stroke="#e0a030" stroke-width="0.6"/><rect x="2" y="7" width="12" height="3" fill="#fde8a0"/><rect x="11.5" y="11" width="3" height="3.5" fill="#5a7ab0"/></svg>
<div class="mi" style="top:632px">View booking locations</div>
<svg class="a" style="left:1022px;top:631px" width="16" height="16" viewBox="0 0 16 16"><circle cx="6.5" cy="10" r="5.5" fill="#2a78d0"/><path d="M3 7 Q5 6 6 8 Q5 10 3.5 10 Z M7 11 Q9 10 10 12 Q9 14.5 7.5 14 Z M6 5 Q8 5 9 6.5 L7.5 7 Z" fill="#4ab83a"/><path d="M8 8 L12.5 3.5" stroke="#888" stroke-width="1"/><rect x="11" y="0.5" width="4.5" height="4.5" transform="rotate(45 13.2 2.7)" fill="#e81010"/></svg>
<svg class="a" style="left:1088px;top:516px" width="24" height="26" viewBox="0 0 24 26"><path d="M8 14 V3 Q9.75 0.5 11.5 3 V8.5 Q13 7 14.5 8.5 V9.5 Q16 8 17.5 9.5 V10.5 Q19 9 20.5 10.5 V18 Q20.5 22 18.5 25 H11.5 Q9 22 5 17.5 Q3.5 15.5 5.5 14.8 Q7 14.5 8 16 Z" fill="#fff" stroke="#000" stroke-width="1.2" stroke-linejoin="round"/><path d="M11.5 8.5 V13 M14.5 9.5 V13 M17.5 10.5 V13" stroke="#000" stroke-width="1"/></svg>
</body></html>
